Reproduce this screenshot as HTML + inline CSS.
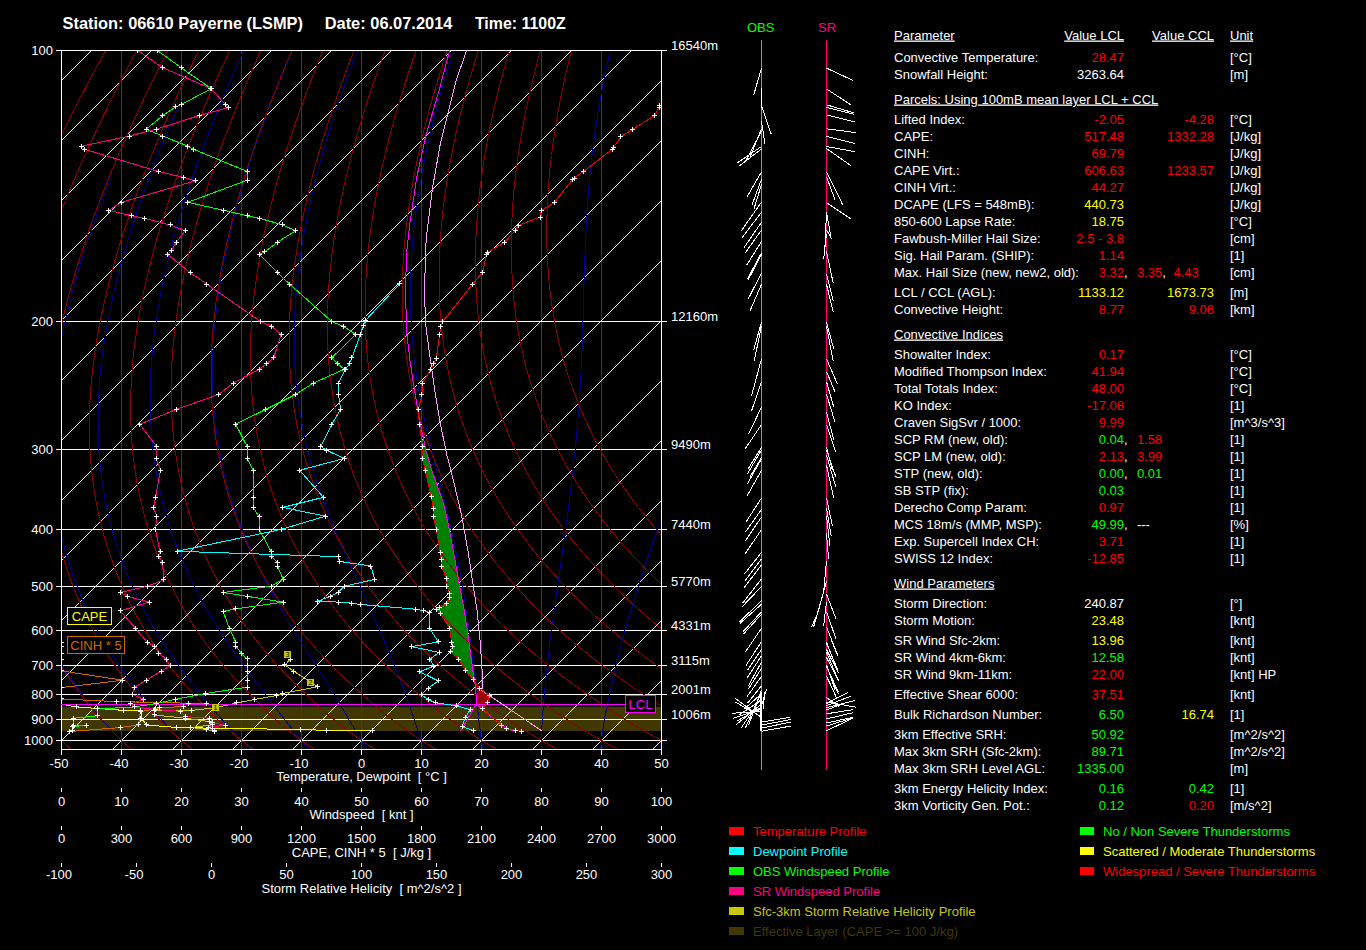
<!DOCTYPE html>
<html><head><meta charset="utf-8"><title>Sounding 06610 Payerne</title>
<style>html,body{margin:0;padding:0;background:#000;overflow:hidden}body{width:1366px;height:950px;position:relative}</style></head>
<body>
<svg width="1366" height="950" viewBox="0 0 1366 950" style="position:absolute;left:0;top:0" font-family="'Liberation Sans', sans-serif" font-size="13px">
<rect width="1366" height="950" fill="#000"/>
<defs><clipPath id="cp"><rect x="61" y="50" width="601" height="700"/></clipPath></defs>
<g clip-path="url(#cp)" shape-rendering="crispEdges">
<rect x="61" y="707" width="601" height="24" fill="#403800"/>
<line x1="121.5" y1="50.5" x2="121.5" y2="749.5" stroke="#006400" stroke-width="1"/>
<line x1="181.5" y1="50.5" x2="181.5" y2="749.5" stroke="#006400" stroke-width="1"/>
<line x1="241.5" y1="50.5" x2="241.5" y2="749.5" stroke="#006400" stroke-width="1"/>
<line x1="301.5" y1="50.5" x2="301.5" y2="749.5" stroke="#006400" stroke-width="1"/>
<line x1="361.5" y1="50.5" x2="361.5" y2="749.5" stroke="#006400" stroke-width="1"/>
<line x1="421.5" y1="50.5" x2="421.5" y2="749.5" stroke="#006400" stroke-width="1"/>
<line x1="481.5" y1="50.5" x2="481.5" y2="749.5" stroke="#006400" stroke-width="1"/>
<line x1="541.5" y1="50.5" x2="541.5" y2="749.5" stroke="#006400" stroke-width="1"/>
<line x1="601.5" y1="50.5" x2="601.5" y2="749.5" stroke="#006400" stroke-width="1"/>
<line x1="-667.5" y1="749.5" x2="31.5" y2="50.5" stroke="#fff" stroke-width="1"/>
<line x1="-607.5" y1="749.5" x2="91.5" y2="50.5" stroke="#fff" stroke-width="1"/>
<line x1="-547.5" y1="749.5" x2="151.5" y2="50.5" stroke="#fff" stroke-width="1"/>
<line x1="-487.5" y1="749.5" x2="211.5" y2="50.5" stroke="#fff" stroke-width="1"/>
<line x1="-427.5" y1="749.5" x2="271.5" y2="50.5" stroke="#fff" stroke-width="1"/>
<line x1="-367.5" y1="749.5" x2="331.5" y2="50.5" stroke="#fff" stroke-width="1"/>
<line x1="-307.5" y1="749.5" x2="391.5" y2="50.5" stroke="#fff" stroke-width="1"/>
<line x1="-247.5" y1="749.5" x2="451.5" y2="50.5" stroke="#fff" stroke-width="1"/>
<line x1="-187.5" y1="749.5" x2="511.5" y2="50.5" stroke="#fff" stroke-width="1"/>
<line x1="-127.5" y1="749.5" x2="571.5" y2="50.5" stroke="#fff" stroke-width="1"/>
<line x1="-67.5" y1="749.5" x2="631.5" y2="50.5" stroke="#fff" stroke-width="1"/>
<line x1="-7.5" y1="749.5" x2="691.5" y2="50.5" stroke="#fff" stroke-width="1"/>
<line x1="52.5" y1="749.5" x2="751.5" y2="50.5" stroke="#fff" stroke-width="1"/>
<line x1="112.5" y1="749.5" x2="811.5" y2="50.5" stroke="#fff" stroke-width="1"/>
<line x1="172.5" y1="749.5" x2="871.5" y2="50.5" stroke="#fff" stroke-width="1"/>
<line x1="232.5" y1="749.5" x2="931.5" y2="50.5" stroke="#fff" stroke-width="1"/>
<line x1="292.5" y1="749.5" x2="991.5" y2="50.5" stroke="#fff" stroke-width="1"/>
<line x1="352.5" y1="749.5" x2="1051.5" y2="50.5" stroke="#fff" stroke-width="1"/>
<line x1="412.5" y1="749.5" x2="1111.5" y2="50.5" stroke="#fff" stroke-width="1"/>
<line x1="472.5" y1="749.5" x2="1171.5" y2="50.5" stroke="#fff" stroke-width="1"/>
<line x1="532.5" y1="749.5" x2="1231.5" y2="50.5" stroke="#fff" stroke-width="1"/>
<line x1="592.5" y1="749.5" x2="1291.5" y2="50.5" stroke="#fff" stroke-width="1"/>
<line x1="652.5" y1="749.5" x2="1351.5" y2="50.5" stroke="#fff" stroke-width="1"/>
<line x1="61.5" y1="50.5" x2="661.5" y2="50.5" stroke="#fff" stroke-width="1"/>
<line x1="61.5" y1="321.5" x2="661.5" y2="321.5" stroke="#fff" stroke-width="1"/>
<line x1="61.5" y1="449.5" x2="661.5" y2="449.5" stroke="#fff" stroke-width="1"/>
<line x1="61.5" y1="529.5" x2="661.5" y2="529.5" stroke="#fff" stroke-width="1"/>
<line x1="61.5" y1="586.5" x2="661.5" y2="586.5" stroke="#fff" stroke-width="1"/>
<line x1="61.5" y1="630.5" x2="661.5" y2="630.5" stroke="#fff" stroke-width="1"/>
<line x1="61.5" y1="665.5" x2="661.5" y2="665.5" stroke="#fff" stroke-width="1"/>
<line x1="61.5" y1="694.5" x2="661.5" y2="694.5" stroke="#fff" stroke-width="1"/>
<line x1="61.5" y1="719.5" x2="661.5" y2="719.5" stroke="#fff" stroke-width="1"/>
<line x1="61.5" y1="740.5" x2="661.5" y2="740.5" stroke="#fff" stroke-width="1"/>
<polygon points="422.0,438.0 422.5,446.4 422.5,458.7 425.1,470.1 431.2,496.4 433.3,508.2 433.3,516.9 436.5,529.5 440.4,553.0 441.2,559.6 441.7,566.2 446.5,578.1 447.0,586.0 449.6,593.9 449.6,597.8 446.5,603.1 439.1,607.1 436.4,609.7 440.4,613.6 449.6,628.1 451.7,642.6 452.3,646.6 450.9,651.9 458.8,659.2 465.4,670.3 473.3,679.5 474.0,681.0 474.7,680.9 472.8,670.3 470.7,654.5 467.5,630.8 464.1,609.7 459.6,586.0 454.9,559.6 449.6,530.6 443.8,504.3 431.7,470.0 425.9,450.3" fill="#008000"/>
<polygon points="474.7,680.9 479.9,688.2 489.2,695.4 487.8,702.0 483.0,709.0 479.0,706.5 476.0,704.5 476.0,694.0" fill="#a00000"/>
<polyline points="-4.9,293.5 -5.9,296.5 -6.8,299.5 -7.8,302.5 -8.7,305.5 -9.7,308.5 -10.6,311.5 -11.5,314.5 -12.4,317.5 -13.3,320.5 -14.1,323.5 -15.0,326.5 -15.8,329.5 -16.7,332.5 -17.5,335.5 -18.3,338.5 -19.1,341.5 -19.8,344.5 -20.6,347.5 -21.4,350.5 -22.1,353.5 -22.8,356.5 -23.5,359.5 -24.2,362.5 -24.9,365.5 -25.5,368.5 -26.2,371.5 -26.8,374.5 -27.4,377.5 -28.0,380.5 -28.6,383.5 -29.2,386.5 -29.7,389.5 -30.2,392.5 -30.8,395.5 -31.3,398.5 -31.8,401.5 -32.2,404.5 -32.7,407.5 -33.1,410.5 -33.5,413.5 -34.0,416.5 -34.3,419.5 -34.7,422.5 -35.1,425.5 -35.4,428.5 -35.7,431.5 -36.0,434.5 -36.3,437.5 -36.6,440.5 -36.9,443.5 -37.1,446.5 -37.3,449.5 -37.5,452.5 -37.7,455.5 -37.9,458.5 -38.0,461.5 -38.2,464.5 -38.3,467.5 -38.4,470.5 -38.4,473.5 -38.5,476.5 -38.5,479.5 -38.5,482.5 -38.5,485.5 -38.4,488.5 -38.4,491.5 -38.3,494.5 -38.2,497.5 -38.1,500.5 -37.9,503.5 -37.8,506.5 -37.6,509.5 -37.4,512.5 -37.1,515.5 -36.9,518.5 -36.6,521.5 -36.3,524.5 -36.0,527.5 -35.7,530.5 -35.3,533.5 -34.9,536.5 -34.5,539.5 -34.1,542.5 -33.6,545.5 -33.1,548.5 -32.6,551.5 -32.1,554.5 -31.5,557.5 -30.9,560.5 -30.3,563.5 -29.7,566.5 -29.0,569.5 -28.3,572.5 -27.6,575.5 -26.9,578.5 -26.1,581.5 -25.3,584.5 -24.5,587.5 -23.7,590.5 -22.8,593.5 -22.0,596.5 -21.1,599.5 -20.1,602.5 -19.2,605.5 -18.2,608.5 -17.2,611.5 -16.1,614.5 -15.0,617.5 -13.9,620.5 -12.8,623.5 -11.6,626.5 -10.4,629.5 -9.1,632.5 -7.8,635.5 -6.5,638.5 -5.1,641.5 -3.7,644.5 -2.3,647.5 -0.8,650.5 0.7,653.5 2.3,656.5 3.9,659.5 5.5,662.5 7.2,665.5 8.9,668.5 10.6,671.5 12.4,674.5 14.2,677.5 16.1,680.5 18.0,683.5 19.9,686.5 21.8,689.5 23.8,692.5 25.9,695.5 27.9,698.5 29.9,701.5 32.0,704.5 34.1,707.5 36.2,710.5 38.4,713.5 40.7,716.5 43.1,719.5 45.5,722.5 48.0,725.5 50.6,728.5 53.2,731.5 55.9,734.5 58.7,737.5 61.5,740.5 64.5,743.5 67.7,746.5 71.1,749.5" fill="none" stroke="#00008b" stroke-width="1" />
<polyline points="51.9,236.5 50.8,239.5 49.7,242.5 48.6,245.5 47.6,248.5 46.5,251.5 45.5,254.5 44.4,257.5 43.4,260.5 42.4,263.5 41.4,266.5 40.4,269.5 39.4,272.5 38.5,275.5 37.5,278.5 36.6,281.5 35.7,284.5 34.7,287.5 33.8,290.5 32.9,293.5 32.0,296.5 31.2,299.5 30.3,302.5 29.5,305.5 28.6,308.5 27.8,311.5 27.0,314.5 26.2,317.5 25.4,320.5 24.6,323.5 23.9,326.5 23.1,329.5 22.4,332.5 21.7,335.5 21.0,338.5 20.3,341.5 19.6,344.5 19.0,347.5 18.3,350.5 17.7,353.5 17.1,356.5 16.5,359.5 15.9,362.5 15.3,365.5 14.8,368.5 14.2,371.5 13.7,374.5 13.2,377.5 12.7,380.5 12.3,383.5 11.8,386.5 11.4,389.5 10.9,392.5 10.5,395.5 10.1,398.5 9.8,401.5 9.4,404.5 9.1,407.5 8.7,410.5 8.4,413.5 8.2,416.5 7.9,419.5 7.6,422.5 7.4,425.5 7.2,428.5 7.0,431.5 6.8,434.5 6.6,437.5 6.5,440.5 6.3,443.5 6.2,446.5 6.1,449.5 6.0,452.5 6.0,455.5 5.9,458.5 5.9,461.5 5.9,464.5 6.0,467.5 6.0,470.5 6.1,473.5 6.2,476.5 6.3,479.5 6.4,482.5 6.6,485.5 6.7,488.5 6.9,491.5 7.2,494.5 7.4,497.5 7.7,500.5 8.0,503.5 8.3,506.5 8.6,509.5 9.0,512.5 9.3,515.5 9.7,518.5 10.1,521.5 10.6,524.5 11.1,527.5 11.5,530.5 12.1,533.5 12.6,536.5 13.2,539.5 13.8,542.5 14.4,545.5 15.0,548.5 15.7,551.5 16.4,554.5 17.1,557.5 17.9,560.5 18.7,563.5 19.5,566.5 20.3,569.5 21.1,572.5 22.0,575.5 22.9,578.5 23.9,581.5 24.8,584.5 25.8,587.5 26.8,590.5 27.8,593.5 28.9,596.5 30.0,599.5 31.1,602.5 32.2,605.5 33.4,608.5 34.6,611.5 35.8,614.5 37.1,617.5 38.4,620.5 39.7,623.5 41.1,626.5 42.5,629.5 43.9,632.5 45.4,635.5 46.9,638.5 48.5,641.5 50.1,644.5 51.7,647.5 53.4,650.5 55.1,653.5 56.9,656.5 58.7,659.5 60.5,662.5 62.4,665.5 64.3,668.5 66.2,671.5 68.2,674.5 70.2,677.5 72.3,680.5 74.4,683.5 76.5,686.5 78.7,689.5 80.9,692.5 83.1,695.5 85.3,698.5 87.6,701.5 89.8,704.5 92.1,707.5 94.4,710.5 96.8,713.5 99.3,716.5 101.8,719.5 104.5,722.5 107.2,725.5 109.9,728.5 112.7,731.5 115.6,734.5 118.5,737.5 121.5,740.5 124.7,743.5 128.1,746.5 131.6,749.5" fill="none" stroke="#00008b" stroke-width="1" />
<polyline points="111.4,176.5 110.2,179.5 109.0,182.5 107.9,185.5 106.7,188.5 105.5,191.5 104.4,194.5 103.2,197.5 102.1,200.5 101.0,203.5 99.8,206.5 98.7,209.5 97.6,212.5 96.5,215.5 95.5,218.5 94.4,221.5 93.3,224.5 92.3,227.5 91.2,230.5 90.2,233.5 89.2,236.5 88.2,239.5 87.2,242.5 86.2,245.5 85.2,248.5 84.3,251.5 83.3,254.5 82.4,257.5 81.4,260.5 80.5,263.5 79.6,266.5 78.7,269.5 77.8,272.5 77.0,275.5 76.1,278.5 75.2,281.5 74.4,284.5 73.6,287.5 72.8,290.5 72.0,293.5 71.2,296.5 70.4,299.5 69.6,302.5 68.9,305.5 68.1,308.5 67.4,311.5 66.7,314.5 66.0,317.5 65.3,320.5 64.6,323.5 64.0,326.5 63.3,329.5 62.7,332.5 62.1,335.5 61.5,338.5 60.9,341.5 60.4,344.5 59.8,347.5 59.3,350.5 58.7,353.5 58.2,356.5 57.7,359.5 57.3,362.5 56.8,365.5 56.4,368.5 55.9,371.5 55.5,374.5 55.1,377.5 54.8,380.5 54.4,383.5 54.1,386.5 53.7,389.5 53.4,392.5 53.2,395.5 52.9,398.5 52.6,401.5 52.4,404.5 52.2,407.5 52.0,410.5 51.8,413.5 51.6,416.5 51.5,419.5 51.3,422.5 51.2,425.5 51.1,428.5 51.0,431.5 51.0,434.5 50.9,437.5 50.9,440.5 50.9,443.5 50.9,446.5 51.0,449.5 51.0,452.5 51.1,455.5 51.2,458.5 51.3,461.5 51.4,464.5 51.6,467.5 51.8,470.5 52.0,473.5 52.2,476.5 52.5,479.5 52.8,482.5 53.1,485.5 53.4,488.5 53.7,491.5 54.1,494.5 54.5,497.5 54.9,500.5 55.3,503.5 55.8,506.5 56.3,509.5 56.8,512.5 57.3,515.5 57.8,518.5 58.4,521.5 59.0,524.5 59.6,527.5 60.3,530.5 60.9,533.5 61.6,536.5 62.4,539.5 63.1,542.5 63.9,545.5 64.7,548.5 65.6,551.5 66.4,554.5 67.3,557.5 68.2,560.5 69.2,563.5 70.1,566.5 71.1,569.5 72.2,572.5 73.2,575.5 74.3,578.5 75.4,581.5 76.5,584.5 77.7,587.5 78.9,590.5 80.1,593.5 81.3,596.5 82.6,599.5 83.9,602.5 85.2,605.5 86.5,608.5 87.9,611.5 89.3,614.5 90.8,617.5 92.2,620.5 93.7,623.5 95.3,626.5 96.9,629.5 98.5,632.5 100.2,635.5 101.9,638.5 103.7,641.5 105.5,644.5 107.3,647.5 109.2,650.5 111.1,653.5 113.0,656.5 115.0,659.5 117.0,662.5 119.1,665.5 121.1,668.5 123.3,671.5 125.4,674.5 127.6,677.5 129.8,680.5 132.1,683.5 134.4,686.5 136.7,689.5 139.1,692.5 141.5,695.5 143.9,698.5 146.2,701.5 148.6,704.5 151.0,707.5 153.5,710.5 156.0,713.5 158.6,716.5 161.3,719.5 164.0,722.5 166.8,725.5 169.7,728.5 172.5,731.5 175.5,734.5 178.5,737.5 181.5,740.5 184.7,743.5 188.1,746.5 191.6,749.5" fill="none" stroke="#00008b" stroke-width="1" />
<polyline points="176.5,110.5 175.2,113.5 173.8,116.5 172.6,119.5 171.3,122.5 170.0,125.5 168.7,128.5 167.5,131.5 166.2,134.5 165.0,137.5 163.7,140.5 162.5,143.5 161.3,146.5 160.1,149.5 158.9,152.5 157.7,155.5 156.5,158.5 155.3,161.5 154.2,164.5 153.0,167.5 151.9,170.5 150.7,173.5 149.6,176.5 148.5,179.5 147.4,182.5 146.3,185.5 145.2,188.5 144.1,191.5 143.0,194.5 141.9,197.5 140.9,200.5 139.9,203.5 138.8,206.5 137.8,209.5 136.8,212.5 135.8,215.5 134.8,218.5 133.8,221.5 132.8,224.5 131.9,227.5 130.9,230.5 130.0,233.5 129.1,236.5 128.2,239.5 127.3,242.5 126.4,245.5 125.5,248.5 124.6,251.5 123.7,254.5 122.9,257.5 122.1,260.5 121.2,263.5 120.4,266.5 119.6,269.5 118.8,272.5 118.1,275.5 117.3,278.5 116.5,281.5 115.8,284.5 115.1,287.5 114.4,290.5 113.7,293.5 113.0,296.5 112.3,299.5 111.6,302.5 111.0,305.5 110.4,308.5 109.7,311.5 109.1,314.5 108.5,317.5 108.0,320.5 107.4,323.5 106.8,326.5 106.3,329.5 105.8,332.5 105.3,335.5 104.8,338.5 104.3,341.5 103.9,344.5 103.4,347.5 103.0,350.5 102.6,353.5 102.2,356.5 101.8,359.5 101.5,362.5 101.1,365.5 100.8,368.5 100.5,371.5 100.2,374.5 99.9,377.5 99.7,380.5 99.4,383.5 99.2,386.5 99.0,389.5 98.8,392.5 98.7,395.5 98.5,398.5 98.4,401.5 98.3,404.5 98.2,407.5 98.1,410.5 98.1,413.5 98.0,416.5 98.0,419.5 98.0,422.5 98.0,425.5 98.1,428.5 98.1,431.5 98.2,434.5 98.3,437.5 98.4,440.5 98.5,443.5 98.7,446.5 98.9,449.5 99.1,452.5 99.3,455.5 99.5,458.5 99.8,461.5 100.1,464.5 100.4,467.5 100.7,470.5 101.1,473.5 101.4,476.5 101.8,479.5 102.3,482.5 102.7,485.5 103.2,488.5 103.7,491.5 104.2,494.5 104.7,497.5 105.3,500.5 105.9,503.5 106.5,506.5 107.1,509.5 107.8,512.5 108.5,515.5 109.2,518.5 109.9,521.5 110.7,524.5 111.5,527.5 112.3,530.5 113.1,533.5 114.0,536.5 114.9,539.5 115.8,542.5 116.8,545.5 117.8,548.5 118.8,551.5 119.8,554.5 120.9,557.5 122.0,560.5 123.1,563.5 124.2,566.5 125.4,569.5 126.6,572.5 127.8,575.5 129.1,578.5 130.4,581.5 131.7,584.5 133.0,587.5 134.4,590.5 135.8,593.5 137.2,596.5 138.6,599.5 140.1,602.5 141.6,605.5 143.1,608.5 144.6,611.5 146.2,614.5 147.8,617.5 149.5,620.5 151.2,623.5 152.9,626.5 154.7,629.5 156.5,632.5 158.3,635.5 160.2,638.5 162.1,641.5 164.1,644.5 166.1,647.5 168.1,650.5 170.2,653.5 172.2,656.5 174.4,659.5 176.5,662.5 178.7,665.5 180.9,668.5 183.2,671.5 185.5,674.5 187.8,677.5 190.1,680.5 192.5,683.5 194.8,686.5 197.2,689.5 199.7,692.5 202.1,695.5 204.6,698.5 207.0,701.5 209.4,704.5 211.8,707.5 214.3,710.5 216.8,713.5 219.4,716.5 222.0,719.5 224.7,722.5 227.4,725.5 230.2,728.5 233.0,731.5 235.8,734.5 238.6,737.5 241.5,740.5 244.5,743.5 247.7,746.5 251.0,749.5" fill="none" stroke="#00008b" stroke-width="1" />
<polyline points="243.8,50.5 242.4,53.5 241.1,56.5 239.7,59.5 238.3,62.5 237.0,65.5 235.7,68.5 234.3,71.5 233.0,74.5 231.7,77.5 230.4,80.5 229.0,83.5 227.7,86.5 226.5,89.5 225.2,92.5 223.9,95.5 222.6,98.5 221.4,101.5 220.1,104.5 218.9,107.5 217.6,110.5 216.4,113.5 215.2,116.5 214.0,119.5 212.8,122.5 211.6,125.5 210.4,128.5 209.2,131.5 208.1,134.5 206.9,137.5 205.8,140.5 204.6,143.5 203.5,146.5 202.4,149.5 201.3,152.5 200.2,155.5 199.1,158.5 198.0,161.5 196.9,164.5 195.8,167.5 194.8,170.5 193.7,173.5 192.7,176.5 191.7,179.5 190.7,182.5 189.7,185.5 188.7,188.5 187.7,191.5 186.7,194.5 185.7,197.5 184.8,200.5 183.8,203.5 182.9,206.5 182.0,209.5 181.1,212.5 180.2,215.5 179.3,218.5 178.4,221.5 177.5,224.5 176.7,227.5 175.8,230.5 175.0,233.5 174.2,236.5 173.3,239.5 172.5,242.5 171.8,245.5 171.0,248.5 170.2,251.5 169.5,254.5 168.7,257.5 168.0,260.5 167.3,263.5 166.6,266.5 165.9,269.5 165.2,272.5 164.5,275.5 163.9,278.5 163.2,281.5 162.6,284.5 162.0,287.5 161.4,290.5 160.8,293.5 160.2,296.5 159.7,299.5 159.1,302.5 158.6,305.5 158.1,308.5 157.6,311.5 157.1,314.5 156.6,317.5 156.2,320.5 155.7,323.5 155.3,326.5 154.9,329.5 154.5,332.5 154.1,335.5 153.7,338.5 153.4,341.5 153.1,344.5 152.7,347.5 152.4,350.5 152.2,353.5 151.9,356.5 151.7,359.5 151.4,362.5 151.2,365.5 151.0,368.5 150.9,371.5 150.7,374.5 150.6,377.5 150.5,380.5 150.4,383.5 150.3,386.5 150.2,389.5 150.2,392.5 150.1,395.5 150.1,398.5 150.2,401.5 150.2,404.5 150.2,407.5 150.3,410.5 150.4,413.5 150.5,416.5 150.6,419.5 150.8,422.5 150.9,425.5 151.1,428.5 151.3,431.5 151.6,434.5 151.8,437.5 152.1,440.5 152.4,443.5 152.7,446.5 153.0,449.5 153.4,452.5 153.7,455.5 154.1,458.5 154.6,461.5 155.0,464.5 155.5,467.5 156.0,470.5 156.5,473.5 157.0,476.5 157.6,479.5 158.2,482.5 158.8,485.5 159.5,488.5 160.1,491.5 160.8,494.5 161.5,497.5 162.3,500.5 163.0,503.5 163.8,506.5 164.6,509.5 165.5,512.5 166.3,515.5 167.2,518.5 168.1,521.5 169.1,524.5 170.0,527.5 171.0,530.5 172.0,533.5 173.1,536.5 174.2,539.5 175.3,542.5 176.4,545.5 177.6,548.5 178.7,551.5 180.0,554.5 181.2,557.5 182.5,560.5 183.8,563.5 185.1,566.5 186.5,569.5 187.8,572.5 189.2,575.5 190.7,578.5 192.1,581.5 193.6,584.5 195.1,587.5 196.6,590.5 198.2,593.5 199.8,596.5 201.4,599.5 203.0,602.5 204.6,605.5 206.3,608.5 208.0,611.5 209.7,614.5 211.5,617.5 213.3,620.5 215.1,623.5 217.0,626.5 218.8,629.5 220.8,632.5 222.7,635.5 224.7,638.5 226.7,641.5 228.7,644.5 230.8,647.5 232.9,650.5 235.0,653.5 237.1,656.5 239.3,659.5 241.5,662.5 243.7,665.5 245.9,668.5 248.1,671.5 250.4,674.5 252.6,677.5 254.9,680.5 257.2,683.5 259.5,686.5 261.8,689.5 264.1,692.5 266.4,695.5 268.7,698.5 270.9,701.5 273.2,704.5 275.4,707.5 277.6,710.5 279.9,713.5 282.2,716.5 284.6,719.5 286.9,722.5 289.3,725.5 291.8,728.5 294.2,731.5 296.6,734.5 299.0,737.5 301.5,740.5 304.1,743.5 306.8,746.5 309.6,749.5" fill="none" stroke="#00008b" stroke-width="1" />
<polyline points="292.3,50.5 291.0,53.5 289.7,56.5 288.5,59.5 287.2,62.5 285.9,65.5 284.7,68.5 283.4,71.5 282.2,74.5 281.0,77.5 279.8,80.5 278.6,83.5 277.4,86.5 276.2,89.5 275.0,92.5 273.8,95.5 272.6,98.5 271.5,101.5 270.3,104.5 269.2,107.5 268.1,110.5 266.9,113.5 265.8,116.5 264.7,119.5 263.6,122.5 262.5,125.5 261.5,128.5 260.4,131.5 259.3,134.5 258.3,137.5 257.2,140.5 256.2,143.5 255.2,146.5 254.2,149.5 253.2,152.5 252.2,155.5 251.2,158.5 250.2,161.5 249.3,164.5 248.3,167.5 247.4,170.5 246.4,173.5 245.5,176.5 244.6,179.5 243.7,182.5 242.8,185.5 241.9,188.5 241.0,191.5 240.2,194.5 239.3,197.5 238.5,200.5 237.7,203.5 236.9,206.5 236.1,209.5 235.3,212.5 234.5,215.5 233.7,218.5 233.0,221.5 232.2,224.5 231.5,227.5 230.8,230.5 230.1,233.5 229.4,236.5 228.7,239.5 228.0,242.5 227.3,245.5 226.7,248.5 226.0,251.5 225.4,254.5 224.8,257.5 224.2,260.5 223.6,263.5 223.1,266.5 222.5,269.5 222.0,272.5 221.4,275.5 220.9,278.5 220.4,281.5 219.9,284.5 219.4,287.5 219.0,290.5 218.5,293.5 218.1,296.5 217.7,299.5 217.3,302.5 216.9,305.5 216.5,308.5 216.2,311.5 215.8,314.5 215.5,317.5 215.2,320.5 214.9,323.5 214.6,326.5 214.3,329.5 214.1,332.5 213.9,335.5 213.6,338.5 213.5,341.5 213.3,344.5 213.1,347.5 213.0,350.5 212.9,353.5 212.8,356.5 212.7,359.5 212.6,362.5 212.6,365.5 212.5,368.5 212.5,371.5 212.5,374.5 212.6,377.5 212.6,380.5 212.7,383.5 212.8,386.5 212.9,389.5 213.0,392.5 213.1,395.5 213.3,398.5 213.5,401.5 213.7,404.5 213.9,407.5 214.2,410.5 214.4,413.5 214.7,416.5 215.0,419.5 215.3,422.5 215.7,425.5 216.1,428.5 216.4,431.5 216.9,434.5 217.3,437.5 217.7,440.5 218.2,443.5 218.7,446.5 219.2,449.5 219.8,452.5 220.3,455.5 220.9,458.5 221.5,461.5 222.2,464.5 222.8,467.5 223.5,470.5 224.2,473.5 225.0,476.5 225.7,479.5 226.5,482.5 227.3,485.5 228.1,488.5 229.0,491.5 229.9,494.5 230.8,497.5 231.7,500.5 232.7,503.5 233.7,506.5 234.7,509.5 235.7,512.5 236.7,515.5 237.8,518.5 238.9,521.5 240.0,524.5 241.2,527.5 242.4,530.5 243.6,533.5 244.8,536.5 246.0,539.5 247.3,542.5 248.6,545.5 250.0,548.5 251.3,551.5 252.7,554.5 254.1,557.5 255.5,560.5 257.0,563.5 258.4,566.5 259.9,569.5 261.4,572.5 263.0,575.5 264.5,578.5 266.1,581.5 267.7,584.5 269.3,587.5 270.9,590.5 272.5,593.5 274.2,596.5 275.8,599.5 277.5,602.5 279.2,605.5 280.9,608.5 282.6,611.5 284.4,614.5 286.1,617.5 287.9,620.5 289.7,623.5 291.5,626.5 293.3,629.5 295.1,632.5 297.0,635.5 298.9,638.5 300.8,641.5 302.6,644.5 304.5,647.5 306.4,650.5 308.4,653.5 310.3,656.5 312.2,659.5 314.1,662.5 316.0,665.5 317.9,668.5 319.9,671.5 321.8,674.5 323.7,677.5 325.6,680.5 327.5,683.5 329.4,686.5 331.2,689.5 333.1,692.5 334.9,695.5 336.7,698.5 338.5,701.5 340.2,704.5 341.9,707.5 343.7,710.5 345.4,713.5 347.1,716.5 348.9,719.5 350.7,722.5 352.5,725.5 354.3,728.5 356.1,731.5 357.9,734.5 359.7,737.5 361.5,740.5 363.4,743.5 365.4,746.5 367.5,749.5" fill="none" stroke="#00008b" stroke-width="1" />
<polyline points="357.4,50.5 356.3,53.5 355.1,56.5 354.0,59.5 352.8,62.5 351.7,65.5 350.6,68.5 349.5,71.5 348.4,74.5 347.3,77.5 346.2,80.5 345.1,83.5 344.0,86.5 343.0,89.5 341.9,92.5 340.9,95.5 339.9,98.5 338.8,101.5 337.8,104.5 336.8,107.5 335.8,110.5 334.8,113.5 333.9,116.5 332.9,119.5 331.9,122.5 331.0,125.5 330.1,128.5 329.1,131.5 328.2,134.5 327.3,137.5 326.4,140.5 325.5,143.5 324.7,146.5 323.8,149.5 322.9,152.5 322.1,155.5 321.3,158.5 320.4,161.5 319.6,164.5 318.8,167.5 318.0,170.5 317.2,173.5 316.5,176.5 315.7,179.5 315.0,182.5 314.2,185.5 313.5,188.5 312.8,191.5 312.1,194.5 311.4,197.5 310.7,200.5 310.1,203.5 309.4,206.5 308.8,209.5 308.1,212.5 307.5,215.5 306.9,218.5 306.3,221.5 305.7,224.5 305.2,227.5 304.6,230.5 304.1,233.5 303.5,236.5 303.0,239.5 302.5,242.5 302.0,245.5 301.6,248.5 301.1,251.5 300.6,254.5 300.2,257.5 299.8,260.5 299.4,263.5 299.0,266.5 298.6,269.5 298.2,272.5 297.9,275.5 297.6,278.5 297.2,281.5 296.9,284.5 296.6,287.5 296.4,290.5 296.1,293.5 295.9,296.5 295.6,299.5 295.4,302.5 295.2,305.5 295.0,308.5 294.9,311.5 294.7,314.5 294.6,317.5 294.5,320.5 294.4,323.5 294.3,326.5 294.2,329.5 294.2,332.5 294.1,335.5 294.1,338.5 294.1,341.5 294.2,344.5 294.2,347.5 294.3,350.5 294.4,353.5 294.5,356.5 294.6,359.5 294.7,362.5 294.9,365.5 295.1,368.5 295.3,371.5 295.5,374.5 295.7,377.5 296.0,380.5 296.3,383.5 296.6,386.5 296.9,389.5 297.2,392.5 297.6,395.5 298.0,398.5 298.4,401.5 298.8,404.5 299.3,407.5 299.7,410.5 300.2,413.5 300.7,416.5 301.2,419.5 301.8,422.5 302.3,425.5 302.9,428.5 303.5,431.5 304.2,434.5 304.8,437.5 305.5,440.5 306.2,443.5 306.9,446.5 307.6,449.5 308.3,452.5 309.1,455.5 309.9,458.5 310.7,461.5 311.6,464.5 312.4,467.5 313.3,470.5 314.2,473.5 315.1,476.5 316.1,479.5 317.0,482.5 318.0,485.5 319.0,488.5 320.1,491.5 321.1,494.5 322.2,497.5 323.3,500.5 324.4,503.5 325.5,506.5 326.6,509.5 327.8,512.5 328.9,515.5 330.1,518.5 331.3,521.5 332.6,524.5 333.8,527.5 335.0,530.5 336.3,533.5 337.5,536.5 338.8,539.5 340.1,542.5 341.4,545.5 342.8,548.5 344.1,551.5 345.4,554.5 346.8,557.5 348.2,560.5 349.5,563.5 350.9,566.5 352.3,569.5 353.7,572.5 355.0,575.5 356.4,578.5 357.8,581.5 359.2,584.5 360.5,587.5 361.9,590.5 363.3,593.5 364.6,596.5 366.0,599.5 367.3,602.5 368.7,605.5 370.0,608.5 371.3,611.5 372.7,614.5 374.0,617.5 375.3,620.5 376.6,623.5 377.9,626.5 379.3,629.5 380.6,632.5 381.9,635.5 383.2,638.5 384.5,641.5 385.8,644.5 387.0,647.5 388.3,650.5 389.6,653.5 390.8,656.5 392.1,659.5 393.3,662.5 394.5,665.5 395.7,668.5 396.9,671.5 398.1,674.5 399.3,677.5 400.5,680.5 401.6,683.5 402.8,686.5 403.9,689.5 405.0,692.5 406.1,695.5 407.1,698.5 408.1,701.5 409.1,704.5 410.1,707.5 411.1,710.5 412.1,713.5 413.1,716.5 414.1,719.5 415.1,722.5 416.2,725.5 417.2,728.5 418.3,731.5 419.3,734.5 420.4,737.5 421.5,740.5 422.7,743.5 423.9,746.5 425.3,749.5" fill="none" stroke="#00008b" stroke-width="1" />
<polyline points="453.8,50.5 452.8,53.5 451.9,56.5 450.9,59.5 450.0,62.5 449.0,65.5 448.1,68.5 447.2,71.5 446.3,74.5 445.4,77.5 444.5,80.5 443.6,83.5 442.7,86.5 441.8,89.5 441.0,92.5 440.1,95.5 439.3,98.5 438.5,101.5 437.7,104.5 436.9,107.5 436.1,110.5 435.3,113.5 434.5,116.5 433.8,119.5 433.0,122.5 432.3,125.5 431.6,128.5 430.8,131.5 430.1,134.5 429.4,137.5 428.7,140.5 428.1,143.5 427.4,146.5 426.8,149.5 426.1,152.5 425.5,155.5 424.9,158.5 424.3,161.5 423.7,164.5 423.1,167.5 422.5,170.5 422.0,173.5 421.4,176.5 420.9,179.5 420.4,182.5 419.8,185.5 419.4,188.5 418.9,191.5 418.4,194.5 417.9,197.5 417.5,200.5 417.1,203.5 416.6,206.5 416.2,209.5 415.8,212.5 415.4,215.5 415.1,218.5 414.7,221.5 414.4,224.5 414.1,227.5 413.7,230.5 413.4,233.5 413.2,236.5 412.9,239.5 412.6,242.5 412.4,245.5 412.1,248.5 411.9,251.5 411.7,254.5 411.5,257.5 411.4,260.5 411.2,263.5 411.1,266.5 410.9,269.5 410.8,272.5 410.7,275.5 410.6,278.5 410.6,281.5 410.5,284.5 410.5,287.5 410.5,290.5 410.5,293.5 410.5,296.5 410.5,299.5 410.5,302.5 410.6,305.5 410.6,308.5 410.7,311.5 410.8,314.5 410.9,317.5 411.1,320.5 411.2,323.5 411.4,326.5 411.6,329.5 411.8,332.5 412.0,335.5 412.2,338.5 412.5,341.5 412.7,344.5 413.0,347.5 413.3,350.5 413.7,353.5 414.0,356.5 414.3,359.5 414.7,362.5 415.1,365.5 415.5,368.5 415.9,371.5 416.4,374.5 416.8,377.5 417.3,380.5 417.7,383.5 418.2,386.5 418.8,389.5 419.3,392.5 419.8,395.5 420.4,398.5 420.9,401.5 421.5,404.5 422.1,407.5 422.7,410.5 423.3,413.5 423.9,416.5 424.6,419.5 425.2,422.5 425.9,425.5 426.5,428.5 427.2,431.5 427.9,434.5 428.6,437.5 429.3,440.5 430.0,443.5 430.7,446.5 431.4,449.5 432.1,452.5 432.8,455.5 433.6,458.5 434.3,461.5 435.0,464.5 435.8,467.5 436.5,470.5 437.3,473.5 438.1,476.5 438.8,479.5 439.6,482.5 440.3,485.5 441.1,488.5 441.8,491.5 442.6,494.5 443.4,497.5 444.1,500.5 444.9,503.5 445.6,506.5 446.3,509.5 447.1,512.5 447.8,515.5 448.5,518.5 449.2,521.5 449.9,524.5 450.6,527.5 451.3,530.5 452.0,533.5 452.7,536.5 453.3,539.5 454.0,542.5 454.7,545.5 455.3,548.5 456.0,551.5 456.6,554.5 457.2,557.5 457.8,560.5 458.4,563.5 459.0,566.5 459.6,569.5 460.2,572.5 460.7,575.5 461.3,578.5 461.8,581.5 462.3,584.5 462.8,587.5 463.3,590.5 463.8,593.5 464.3,596.5 464.7,599.5 465.2,602.5 465.6,605.5 466.0,608.5 466.4,611.5 466.9,614.5 467.3,617.5 467.7,620.5 468.1,623.5 468.4,626.5 468.8,629.5 469.2,632.5 469.6,635.5 470.0,638.5 470.4,641.5 470.8,644.5 471.1,647.5 471.5,650.5 471.9,653.5 472.2,656.5 472.6,659.5 472.9,662.5 473.3,665.5 473.6,668.5 474.0,671.5 474.3,674.5 474.6,677.5 475.0,680.5 475.3,683.5 475.6,686.5 476.0,689.5 476.3,692.5 476.6,695.5 476.9,698.5 477.1,701.5 477.4,704.5 477.6,707.5 477.9,710.5 478.2,713.5 478.5,716.5 478.8,719.5 479.1,722.5 479.5,725.5 479.9,728.5 480.3,731.5 480.7,734.5 481.1,737.5 481.5,740.5 482.0,743.5 482.6,746.5 483.3,749.5" fill="none" stroke="#00008b" stroke-width="1" />
<polyline points="610.3,50.5 609.6,53.5 608.9,56.5 608.2,59.5 607.6,62.5 606.9,65.5 606.3,68.5 605.6,71.5 605.0,74.5 604.4,77.5 603.8,80.5 603.2,83.5 602.6,86.5 602.1,89.5 601.5,92.5 600.9,95.5 600.4,98.5 599.9,101.5 599.4,104.5 598.8,107.5 598.3,110.5 597.8,113.5 597.4,116.5 596.9,119.5 596.4,122.5 596.0,125.5 595.5,128.5 595.1,131.5 594.7,134.5 594.3,137.5 593.9,140.5 593.5,143.5 593.1,146.5 592.7,149.5 592.4,152.5 592.0,155.5 591.7,158.5 591.3,161.5 591.0,164.5 590.7,167.5 590.4,170.5 590.1,173.5 589.8,176.5 589.5,179.5 589.2,182.5 589.0,185.5 588.7,188.5 588.5,191.5 588.2,194.5 588.0,197.5 587.8,200.5 587.6,203.5 587.4,206.5 587.2,209.5 587.0,212.5 586.8,215.5 586.6,218.5 586.4,221.5 586.3,224.5 586.1,227.5 586.0,230.5 585.8,233.5 585.7,236.5 585.6,239.5 585.4,242.5 585.3,245.5 585.2,248.5 585.1,251.5 585.0,254.5 584.8,257.5 584.7,260.5 584.6,263.5 584.5,266.5 584.5,269.5 584.4,272.5 584.3,275.5 584.2,278.5 584.1,281.5 584.0,284.5 583.9,287.5 583.8,290.5 583.8,293.5 583.7,296.5 583.6,299.5 583.5,302.5 583.4,305.5 583.3,308.5 583.2,311.5 583.2,314.5 583.1,317.5 583.0,320.5 582.9,323.5 582.8,326.5 582.7,329.5 582.6,332.5 582.5,335.5 582.4,338.5 582.3,341.5 582.2,344.5 582.1,347.5 581.9,350.5 581.8,353.5 581.7,356.5 581.6,359.5 581.4,362.5 581.3,365.5 581.2,368.5 581.0,371.5 580.9,374.5 580.7,377.5 580.5,380.5 580.4,383.5 580.2,386.5 580.0,389.5 579.8,392.5 579.7,395.5 579.5,398.5 579.3,401.5 579.1,404.5 578.8,407.5 578.6,410.5 578.4,413.5 578.2,416.5 577.9,419.5 577.7,422.5 577.4,425.5 577.2,428.5 576.9,431.5 576.6,434.5 576.3,437.5 576.1,440.5 575.8,443.5 575.5,446.5 575.2,449.5 574.8,452.5 574.5,455.5 574.2,458.5 573.9,461.5 573.6,464.5 573.2,467.5 572.9,470.5 572.6,473.5 572.2,476.5 571.9,479.5 571.5,482.5 571.2,485.5 570.8,488.5 570.4,491.5 570.1,494.5 569.7,497.5 569.3,500.5 568.9,503.5 568.5,506.5 568.2,509.5 567.8,512.5 567.4,515.5 567.0,518.5 566.6,521.5 566.2,524.5 565.8,527.5 565.4,530.5 565.0,533.5 564.5,536.5 564.1,539.5 563.7,542.5 563.3,545.5 562.9,548.5 562.5,551.5 562.1,554.5 561.6,557.5 561.2,560.5 560.8,563.5 560.4,566.5 560.0,569.5 559.6,572.5 559.1,575.5 558.7,578.5 558.3,581.5 557.9,584.5 557.4,587.5 557.0,590.5 556.6,593.5 556.1,596.5 555.7,599.5 555.3,602.5 554.9,605.5 554.4,608.5 554.0,611.5 553.6,614.5 553.2,617.5 552.7,620.5 552.3,623.5 551.9,626.5 551.5,629.5 551.1,632.5 550.8,635.5 550.4,638.5 550.0,641.5 549.7,644.5 549.3,647.5 548.9,650.5 548.6,653.5 548.3,656.5 547.9,659.5 547.6,662.5 547.3,665.5 547.0,668.5 546.7,671.5 546.4,674.5 546.1,677.5 545.8,680.5 545.5,683.5 545.2,686.5 544.9,689.5 544.7,692.5 544.4,695.5 544.1,698.5 543.8,701.5 543.5,704.5 543.2,707.5 543.0,710.5 542.7,713.5 542.5,716.5 542.3,719.5 542.1,722.5 542.0,725.5 541.8,728.5 541.7,731.5 541.6,734.5 541.5,737.5 541.5,740.5 541.5,743.5 541.6,746.5 541.8,749.5" fill="none" stroke="#00008b" stroke-width="1" />
<polyline points="853.4,50.5 852.3,53.5 851.1,56.5 850.0,59.5 848.9,62.5 847.8,65.5 846.6,68.5 845.5,71.5 844.4,74.5 843.2,77.5 842.1,80.5 840.9,83.5 839.8,86.5 838.6,89.5 837.5,92.5 836.3,95.5 835.1,98.5 834.0,101.5 832.8,104.5 831.6,107.5 830.4,110.5 829.3,113.5 828.1,116.5 826.9,119.5 825.7,122.5 824.5,125.5 823.3,128.5 822.1,131.5 820.8,134.5 819.6,137.5 818.4,140.5 817.2,143.5 816.0,146.5 814.7,149.5 813.5,152.5 812.3,155.5 811.0,158.5 809.8,161.5 808.6,164.5 807.3,167.5 806.1,170.5 804.8,173.5 803.6,176.5 802.3,179.5 801.0,182.5 799.8,185.5 798.5,188.5 797.3,191.5 796.0,194.5 794.7,197.5 793.4,200.5 792.2,203.5 790.9,206.5 789.6,209.5 788.3,212.5 787.1,215.5 785.8,218.5 784.5,221.5 783.2,224.5 781.9,227.5 780.6,230.5 779.3,233.5 778.0,236.5 776.7,239.5 775.4,242.5 774.1,245.5 772.8,248.5 771.5,251.5 770.2,254.5 768.9,257.5 767.6,260.5 766.3,263.5 765.0,266.5 763.7,269.5 762.4,272.5 761.1,275.5 759.8,278.5 758.5,281.5 757.2,284.5 755.9,287.5 754.6,290.5 753.3,293.5 752.0,296.5 750.7,299.5 749.4,302.5 748.1,305.5 746.8,308.5 745.5,311.5 744.2,314.5 742.9,317.5 741.6,320.5 740.3,323.5 739.0,326.5 737.7,329.5 736.4,332.5 735.1,335.5 733.8,338.5 732.5,341.5 731.2,344.5 729.9,347.5 728.6,350.5 727.3,353.5 726.1,356.5 724.8,359.5 723.5,362.5 722.2,365.5 721.0,368.5 719.7,371.5 718.4,374.5 717.2,377.5 715.9,380.5 714.6,383.5 713.4,386.5 712.1,389.5 710.9,392.5 709.6,395.5 708.4,398.5 707.1,401.5 705.9,404.5 704.6,407.5 703.4,410.5 702.2,413.5 700.9,416.5 699.7,419.5 698.5,422.5 697.3,425.5 696.1,428.5 694.8,431.5 693.6,434.5 692.4,437.5 691.2,440.5 690.0,443.5 688.8,446.5 687.6,449.5 686.4,452.5 685.2,455.5 684.0,458.5 682.9,461.5 681.7,464.5 680.5,467.5 679.3,470.5 678.2,473.5 677.0,476.5 675.9,479.5 674.7,482.5 673.6,485.5 672.4,488.5 671.3,491.5 670.2,494.5 669.1,497.5 667.9,500.5 666.8,503.5 665.7,506.5 664.6,509.5 663.5,512.5 662.4,515.5 661.3,518.5 660.3,521.5 659.2,524.5 658.1,527.5 657.0,530.5 656.0,533.5 654.9,536.5 653.9,539.5 652.8,542.5 651.8,545.5 650.8,548.5 649.7,551.5 648.7,554.5 647.7,557.5 646.7,560.5 645.7,563.5 644.7,566.5 643.7,569.5 642.7,572.5 641.8,575.5 640.8,578.5 639.8,581.5 638.9,584.5 637.9,587.5 637.0,590.5 636.0,593.5 635.1,596.5 634.1,599.5 633.2,602.5 632.3,605.5 631.4,608.5 630.5,611.5 629.6,614.5 628.7,617.5 627.8,620.5 626.9,623.5 626.1,626.5 625.2,629.5 624.4,632.5 623.6,635.5 622.8,638.5 622.0,641.5 621.2,644.5 620.4,647.5 619.6,650.5 618.9,653.5 618.1,656.5 617.4,659.5 616.6,662.5 615.9,665.5 615.2,668.5 614.5,671.5 613.8,674.5 613.2,677.5 612.5,680.5 611.8,683.5 611.2,686.5 610.5,689.5 609.9,692.5 609.3,695.5 608.7,698.5 608.0,701.5 607.4,704.5 606.8,707.5 606.2,710.5 605.6,713.5 605.0,716.5 604.5,719.5 604.0,722.5 603.5,725.5 603.1,728.5 602.7,731.5 602.2,734.5 601.9,737.5 601.5,740.5 601.2,743.5 601.0,746.5 600.9,749.5" fill="none" stroke="#00008b" stroke-width="1" />
<polyline points="1014.1,50.5 1012.1,53.5 1010.1,56.5 1008.1,59.5 1006.1,62.5 1004.0,65.5 1002.0,68.5 1000.0,71.5 998.0,74.5 996.0,77.5 994.0,80.5 992.0,83.5 990.0,86.5 988.0,89.5 986.0,92.5 984.0,95.5 982.0,98.5 980.0,101.5 978.0,104.5 976.0,107.5 974.0,110.5 972.1,113.5 970.1,116.5 968.1,119.5 966.1,122.5 964.2,125.5 962.2,128.5 960.2,131.5 958.3,134.5 956.3,137.5 954.3,140.5 952.4,143.5 950.4,146.5 948.5,149.5 946.5,152.5 944.6,155.5 942.6,158.5 940.7,161.5 938.7,164.5 936.8,167.5 934.9,170.5 932.9,173.5 931.0,176.5 929.1,179.5 927.1,182.5 925.2,185.5 923.3,188.5 921.4,191.5 919.5,194.5 917.6,197.5 915.7,200.5 913.8,203.5 911.9,206.5 910.0,209.5 908.1,212.5 906.2,215.5 904.3,218.5 902.4,221.5 900.5,224.5 898.6,227.5 896.8,230.5 894.9,233.5 893.0,236.5 891.1,239.5 889.3,242.5 887.4,245.5 885.6,248.5 883.7,251.5 881.9,254.5 880.0,257.5 878.2,260.5 876.3,263.5 874.5,266.5 872.7,269.5 870.8,272.5 869.0,275.5 867.2,278.5 865.4,281.5 863.6,284.5 861.8,287.5 860.0,290.5 858.1,293.5 856.4,296.5 854.6,299.5 852.8,302.5 851.0,305.5 849.2,308.5 847.4,311.5 845.7,314.5 843.9,317.5 842.1,320.5 840.4,323.5 838.6,326.5 836.8,329.5 835.1,332.5 833.4,335.5 831.6,338.5 829.9,341.5 828.2,344.5 826.5,347.5 824.7,350.5 823.0,353.5 821.3,356.5 819.6,359.5 817.9,362.5 816.2,365.5 814.6,368.5 812.9,371.5 811.2,374.5 809.5,377.5 807.9,380.5 806.2,383.5 804.6,386.5 802.9,389.5 801.3,392.5 799.6,395.5 798.0,398.5 796.4,401.5 794.8,404.5 793.2,407.5 791.5,410.5 789.9,413.5 788.3,416.5 786.8,419.5 785.2,422.5 783.6,425.5 782.0,428.5 780.4,431.5 778.9,434.5 777.3,437.5 775.8,440.5 774.2,443.5 772.7,446.5 771.2,449.5 769.6,452.5 768.1,455.5 766.6,458.5 765.1,461.5 763.6,464.5 762.1,467.5 760.6,470.5 759.1,473.5 757.6,476.5 756.2,479.5 754.7,482.5 753.3,485.5 751.8,488.5 750.4,491.5 748.9,494.5 747.5,497.5 746.1,500.5 744.7,503.5 743.3,506.5 741.9,509.5 740.5,512.5 739.1,515.5 737.8,518.5 736.4,521.5 735.0,524.5 733.7,527.5 732.3,530.5 731.0,533.5 729.6,536.5 728.3,539.5 727.0,542.5 725.7,545.5 724.4,548.5 723.1,551.5 721.8,554.5 720.6,557.5 719.3,560.5 718.0,563.5 716.8,566.5 715.6,569.5 714.3,572.5 713.1,575.5 711.9,578.5 710.7,581.5 709.5,584.5 708.3,587.5 707.1,590.5 705.9,593.5 704.7,596.5 703.5,599.5 702.4,602.5 701.2,605.5 700.1,608.5 699.0,611.5 697.8,614.5 696.7,617.5 695.6,620.5 694.5,623.5 693.4,626.5 692.4,629.5 691.3,632.5 690.3,635.5 689.3,638.5 688.2,641.5 687.2,644.5 686.2,647.5 685.3,650.5 684.3,653.5 683.3,656.5 682.4,659.5 681.5,662.5 680.5,665.5 679.6,668.5 678.7,671.5 677.8,674.5 677.0,677.5 676.1,680.5 675.3,683.5 674.4,686.5 673.6,689.5 672.8,692.5 672.0,695.5 671.1,698.5 670.3,701.5 669.5,704.5 668.7,707.5 667.9,710.5 667.2,713.5 666.4,716.5 665.7,719.5 665.1,722.5 664.4,725.5 663.8,728.5 663.2,731.5 662.6,734.5 662.0,737.5 661.5,740.5 661.0,743.5 660.7,746.5 660.3,749.5" fill="none" stroke="#00008b" stroke-width="1" />
<polyline points="105.6,50.5 104.0,53.5 102.3,56.5 100.7,59.5 99.0,62.5 97.4,65.5 95.8,68.5 94.1,71.5 92.5,74.5 90.9,77.5 89.3,80.5 87.7,83.5 86.1,86.5 84.5,89.5 83.0,92.5 81.4,95.5 79.8,98.5 78.3,101.5 76.7,104.5 75.2,107.5 73.6,110.5 72.1,113.5 70.6,116.5 69.1,119.5 67.6,122.5 66.1,125.5 64.6,128.5 63.1,131.5 61.6,134.5 60.1,137.5 58.7,140.5 57.2,143.5 55.8,146.5 54.3,149.5 52.9,152.5 51.5,155.5 50.0,158.5 48.6,161.5 47.2,164.5 45.8,167.5 44.4,170.5 43.1,173.5 41.7,176.5 40.3,179.5 39.0,182.5 37.6,185.5 36.3,188.5 35.0,191.5 33.6,194.5 32.3,197.5 31.0,200.5 29.7,203.5 28.4,206.5 27.2,209.5 25.9,212.5 24.6,215.5 23.4,218.5 22.1,221.5 20.9,224.5 19.7,227.5 18.5,230.5 17.3,233.5 16.1,236.5 14.9,239.5 13.7,242.5 12.6,245.5 11.4,248.5 10.3,251.5 9.1,254.5 8.0,257.5 6.9,260.5 5.8,263.5 4.7,266.5 3.6,269.5 2.5,272.5 1.5,275.5 0.4,278.5 -0.6,281.5 -1.7,284.5 -2.7,287.5 -3.7,290.5 -4.7,293.5 -5.7,296.5 -6.6,299.5 -7.6,302.5 -8.6,305.5 -9.5,308.5 -10.4,311.5 -11.3,314.5 -12.2,317.5 -13.1,320.5 -14.0,323.5 -14.9,326.5 -15.7,329.5 -16.6,332.5 -17.4,335.5 -18.2,338.5 -19.0,341.5 -19.8,344.5 -20.5,347.5 -21.3,350.5 -22.0,353.5 -22.8,356.5 -23.5,359.5 -24.2,362.5 -24.8,365.5 -25.5,368.5 -26.2,371.5 -26.8,374.5 -27.4,377.5 -28.0,380.5 -28.6,383.5 -29.2,386.5 -29.8,389.5 -30.3,392.5 -30.8,395.5 -31.3,398.5 -31.8,401.5 -32.3,404.5 -32.8,407.5 -33.2,410.5 -33.7,413.5 -34.1,416.5 -34.5,419.5 -34.8,422.5 -35.2,425.5 -35.6,428.5 -35.9,431.5 -36.2,434.5 -36.5,437.5 -36.8,440.5 -37.1,443.5 -37.3,446.5 -37.5,449.5 -37.7,452.5 -37.9,455.5 -38.1,458.5 -38.3,461.5 -38.4,464.5 -38.5,467.5 -38.6,470.5 -38.7,473.5 -38.7,476.5 -38.8,479.5 -38.8,482.5 -38.8,485.5 -38.7,488.5 -38.7,491.5 -38.6,494.5 -38.5,497.5 -38.4,500.5 -38.2,503.5 -38.1,506.5 -37.9,509.5 -37.7,512.5 -37.5,515.5 -37.2,518.5 -37.0,521.5 -36.7,524.5 -36.4,527.5 -36.0,530.5 -35.7,533.5 -35.3,536.5 -34.9,539.5 -34.5,542.5 -34.0,545.5 -33.5,548.5 -33.0,551.5 -32.5,554.5 -31.9,557.5 -31.4,560.5 -30.7,563.5 -30.1,566.5 -29.5,569.5 -28.8,572.5 -28.1,575.5 -27.3,578.5 -26.6,581.5 -25.8,584.5 -25.0,587.5 -24.2,590.5 -23.3,593.5 -22.5,596.5 -21.6,599.5 -20.6,602.5 -19.7,605.5 -18.7,608.5 -17.7,611.5 -16.6,614.5 -15.6,617.5 -14.5,620.5 -13.3,623.5 -12.1,626.5 -10.9,629.5 -9.6,632.5 -8.4,635.5 -7.0,638.5 -5.6,641.5 -4.2,644.5 -2.8,647.5 -1.3,650.5 0.2,653.5 1.8,656.5 3.4,659.5 5.0,662.5 6.7,665.5 8.4,668.5 10.1,671.5 11.9,674.5 13.7,677.5 15.6,680.5 17.5,683.5 19.4,686.5 21.4,689.5 23.4,692.5 25.4,695.5 27.5,698.5 29.5,701.5 31.6,704.5 33.7,707.5 35.8,710.5 38.1,713.5 40.4,716.5 42.8,719.5 45.2,722.5 47.8,725.5 50.4,728.5 53.1,731.5 55.8,734.5 58.6,737.5 61.5,740.5 64.6,743.5 67.9,746.5 71.3,749.5" fill="none" stroke="#8b0000" stroke-width="1" />
<polyline points="136.7,50.5 135.1,53.5 133.5,56.5 131.9,59.5 130.3,62.5 128.7,65.5 127.2,68.5 125.6,71.5 124.1,74.5 122.5,77.5 121.0,80.5 119.4,83.5 117.9,86.5 116.4,89.5 114.9,92.5 113.4,95.5 111.9,98.5 110.4,101.5 108.9,104.5 107.4,107.5 106.0,110.5 104.5,113.5 103.0,116.5 101.6,119.5 100.1,122.5 98.7,125.5 97.3,128.5 95.9,131.5 94.5,134.5 93.0,137.5 91.7,140.5 90.3,143.5 88.9,146.5 87.5,149.5 86.1,152.5 84.8,155.5 83.4,158.5 82.1,161.5 80.8,164.5 79.4,167.5 78.1,170.5 76.8,173.5 75.5,176.5 74.2,179.5 73.0,182.5 71.7,185.5 70.4,188.5 69.2,191.5 67.9,194.5 66.7,197.5 65.5,200.5 64.2,203.5 63.0,206.5 61.8,209.5 60.6,212.5 59.5,215.5 58.3,218.5 57.1,221.5 56.0,224.5 54.8,227.5 53.7,230.5 52.6,233.5 51.5,236.5 50.4,239.5 49.3,242.5 48.2,245.5 47.1,248.5 46.0,251.5 45.0,254.5 43.9,257.5 42.9,260.5 41.9,263.5 40.9,266.5 39.9,269.5 38.9,272.5 37.9,275.5 37.0,278.5 36.0,281.5 35.1,284.5 34.1,287.5 33.2,290.5 32.3,293.5 31.4,296.5 30.5,299.5 29.7,302.5 28.8,305.5 28.0,308.5 27.1,311.5 26.3,314.5 25.5,317.5 24.7,320.5 23.9,323.5 23.1,326.5 22.4,329.5 21.7,332.5 20.9,335.5 20.2,338.5 19.5,341.5 18.8,344.5 18.2,347.5 17.5,350.5 16.9,353.5 16.3,356.5 15.6,359.5 15.1,362.5 14.5,365.5 13.9,368.5 13.4,371.5 12.8,374.5 12.3,377.5 11.8,380.5 11.3,383.5 10.9,386.5 10.4,389.5 10.0,392.5 9.6,395.5 9.2,398.5 8.8,401.5 8.4,404.5 8.1,407.5 7.7,410.5 7.4,413.5 7.1,416.5 6.8,419.5 6.6,422.5 6.3,425.5 6.1,428.5 5.9,431.5 5.7,434.5 5.5,437.5 5.4,440.5 5.2,443.5 5.1,446.5 5.0,449.5 4.9,452.5 4.8,455.5 4.8,458.5 4.8,461.5 4.8,464.5 4.8,467.5 4.8,470.5 4.9,473.5 5.0,476.5 5.1,479.5 5.2,482.5 5.3,485.5 5.5,488.5 5.7,491.5 5.9,494.5 6.1,497.5 6.4,500.5 6.7,503.5 7.0,506.5 7.3,509.5 7.6,512.5 8.0,515.5 8.4,518.5 8.8,521.5 9.2,524.5 9.7,527.5 10.2,530.5 10.7,533.5 11.2,536.5 11.8,539.5 12.3,542.5 13.0,545.5 13.6,548.5 14.3,551.5 15.0,554.5 15.7,557.5 16.4,560.5 17.2,563.5 18.0,566.5 18.8,569.5 19.6,572.5 20.5,575.5 21.4,578.5 22.3,581.5 23.3,584.5 24.3,587.5 25.3,590.5 26.3,593.5 27.3,596.5 28.4,599.5 29.5,602.5 30.6,605.5 31.8,608.5 33.0,611.5 34.2,614.5 35.5,617.5 36.8,620.5 38.1,623.5 39.5,626.5 40.9,629.5 42.3,632.5 43.8,635.5 45.3,638.5 46.9,641.5 48.5,644.5 50.2,647.5 51.8,650.5 53.6,653.5 55.3,656.5 57.1,659.5 59.0,662.5 60.8,665.5 62.8,668.5 64.7,671.5 66.7,674.5 68.7,677.5 70.8,680.5 72.9,683.5 75.1,686.5 77.3,689.5 79.5,692.5 81.8,695.5 84.0,698.5 86.3,701.5 88.6,704.5 91.0,707.5 93.3,710.5 95.8,713.5 98.3,716.5 101.0,719.5 103.7,722.5 106.5,725.5 109.4,728.5 112.3,731.5 115.3,734.5 118.3,737.5 121.5,740.5 124.8,743.5 128.4,746.5 132.2,749.5" fill="none" stroke="#8b0000" stroke-width="1" />
<polyline points="167.7,50.5 166.2,53.5 164.7,56.5 163.1,59.5 161.6,62.5 160.1,65.5 158.6,68.5 157.1,71.5 155.6,74.5 154.1,77.5 152.7,80.5 151.2,83.5 149.7,86.5 148.3,89.5 146.8,92.5 145.4,95.5 143.9,98.5 142.5,101.5 141.1,104.5 139.7,107.5 138.3,110.5 136.9,113.5 135.5,116.5 134.1,119.5 132.7,122.5 131.4,125.5 130.0,128.5 128.6,131.5 127.3,134.5 126.0,137.5 124.6,140.5 123.3,143.5 122.0,146.5 120.7,149.5 119.4,152.5 118.1,155.5 116.8,158.5 115.6,161.5 114.3,164.5 113.1,167.5 111.8,170.5 110.6,173.5 109.4,176.5 108.1,179.5 106.9,182.5 105.7,185.5 104.6,188.5 103.4,191.5 102.2,194.5 101.0,197.5 99.9,200.5 98.7,203.5 97.6,206.5 96.5,209.5 95.4,212.5 94.3,215.5 93.2,218.5 92.1,221.5 91.0,224.5 90.0,227.5 88.9,230.5 87.9,233.5 86.8,236.5 85.8,239.5 84.8,242.5 83.8,245.5 82.8,248.5 81.8,251.5 80.9,254.5 79.9,257.5 79.0,260.5 78.0,263.5 77.1,266.5 76.2,269.5 75.3,272.5 74.4,275.5 73.5,278.5 72.7,281.5 71.8,284.5 71.0,287.5 70.1,290.5 69.3,293.5 68.5,296.5 67.7,299.5 66.9,302.5 66.2,305.5 65.4,308.5 64.7,311.5 64.0,314.5 63.2,317.5 62.5,320.5 61.8,323.5 61.2,326.5 60.5,329.5 59.9,332.5 59.2,335.5 58.6,338.5 58.0,341.5 57.4,344.5 56.9,347.5 56.3,350.5 55.8,353.5 55.3,356.5 54.8,359.5 54.3,362.5 53.8,365.5 53.3,368.5 52.9,371.5 52.5,374.5 52.1,377.5 51.7,380.5 51.3,383.5 51.0,386.5 50.6,389.5 50.3,392.5 50.0,395.5 49.7,398.5 49.4,401.5 49.2,404.5 48.9,407.5 48.7,410.5 48.5,413.5 48.3,416.5 48.2,419.5 48.0,422.5 47.9,425.5 47.8,428.5 47.7,431.5 47.6,434.5 47.5,437.5 47.5,440.5 47.5,443.5 47.5,446.5 47.5,449.5 47.5,452.5 47.6,455.5 47.7,458.5 47.8,461.5 47.9,464.5 48.1,467.5 48.2,470.5 48.4,473.5 48.6,476.5 48.9,479.5 49.1,482.5 49.4,485.5 49.7,488.5 50.0,491.5 50.4,494.5 50.8,497.5 51.2,500.5 51.6,503.5 52.0,506.5 52.5,509.5 53.0,512.5 53.5,515.5 54.0,518.5 54.6,521.5 55.2,524.5 55.8,527.5 56.4,530.5 57.0,533.5 57.7,536.5 58.4,539.5 59.2,542.5 59.9,545.5 60.7,548.5 61.6,551.5 62.4,554.5 63.3,557.5 64.2,560.5 65.1,563.5 66.1,566.5 67.1,569.5 68.1,572.5 69.1,575.5 70.2,578.5 71.3,581.5 72.4,584.5 73.5,587.5 74.7,590.5 75.9,593.5 77.1,596.5 78.4,599.5 79.6,602.5 81.0,605.5 82.3,608.5 83.7,611.5 85.1,614.5 86.5,617.5 88.0,620.5 89.5,623.5 91.1,626.5 92.7,629.5 94.3,632.5 96.0,635.5 97.7,638.5 99.5,641.5 101.3,644.5 103.1,647.5 105.0,650.5 106.9,653.5 108.9,656.5 110.9,659.5 112.9,662.5 115.0,665.5 117.1,668.5 119.3,671.5 121.5,674.5 123.8,677.5 126.1,680.5 128.4,683.5 130.8,686.5 133.2,689.5 135.6,692.5 138.1,695.5 140.6,698.5 143.1,701.5 145.7,704.5 148.2,707.5 150.8,710.5 153.5,713.5 156.3,716.5 159.2,719.5 162.2,722.5 165.2,725.5 168.3,728.5 171.5,731.5 174.8,734.5 178.1,737.5 181.5,740.5 185.1,743.5 189.0,746.5 193.0,749.5" fill="none" stroke="#8b0000" stroke-width="1" />
<polyline points="198.8,50.5 197.3,53.5 195.8,56.5 194.4,59.5 192.9,62.5 191.5,65.5 190.0,68.5 188.6,71.5 187.2,74.5 185.7,77.5 184.3,80.5 182.9,83.5 181.5,86.5 180.1,89.5 178.7,92.5 177.4,95.5 176.0,98.5 174.6,101.5 173.3,104.5 171.9,107.5 170.6,110.5 169.2,113.5 167.9,116.5 166.6,119.5 165.3,122.5 164.0,125.5 162.7,128.5 161.4,131.5 160.1,134.5 158.9,137.5 157.6,140.5 156.4,143.5 155.1,146.5 153.9,149.5 152.7,152.5 151.5,155.5 150.3,158.5 149.1,161.5 147.9,164.5 146.7,167.5 145.5,170.5 144.4,173.5 143.2,176.5 142.1,179.5 140.9,182.5 139.8,185.5 138.7,188.5 137.6,191.5 136.5,194.5 135.4,197.5 134.3,200.5 133.3,203.5 132.2,206.5 131.2,209.5 130.1,212.5 129.1,215.5 128.1,218.5 127.1,221.5 126.1,224.5 125.1,227.5 124.1,230.5 123.2,233.5 122.2,236.5 121.3,239.5 120.3,242.5 119.4,245.5 118.5,248.5 117.6,251.5 116.7,254.5 115.9,257.5 115.0,260.5 114.2,263.5 113.3,266.5 112.5,269.5 111.7,272.5 110.9,275.5 110.1,278.5 109.3,281.5 108.5,284.5 107.8,287.5 107.0,290.5 106.3,293.5 105.6,296.5 104.9,299.5 104.2,302.5 103.5,305.5 102.9,308.5 102.2,311.5 101.6,314.5 101.0,317.5 100.4,320.5 99.8,323.5 99.2,326.5 98.6,329.5 98.1,332.5 97.6,335.5 97.0,338.5 96.5,341.5 96.1,344.5 95.6,347.5 95.1,350.5 94.7,353.5 94.3,356.5 93.9,359.5 93.5,362.5 93.1,365.5 92.8,368.5 92.4,371.5 92.1,374.5 91.8,377.5 91.5,380.5 91.3,383.5 91.0,386.5 90.8,389.5 90.6,392.5 90.4,395.5 90.2,398.5 90.0,401.5 89.9,404.5 89.8,407.5 89.7,410.5 89.6,413.5 89.5,416.5 89.5,419.5 89.4,422.5 89.4,425.5 89.4,428.5 89.5,431.5 89.5,434.5 89.6,437.5 89.7,440.5 89.8,443.5 89.9,446.5 90.0,449.5 90.2,452.5 90.4,455.5 90.6,458.5 90.8,461.5 91.1,464.5 91.3,467.5 91.6,470.5 92.0,473.5 92.3,476.5 92.7,479.5 93.1,482.5 93.5,485.5 93.9,488.5 94.4,491.5 94.9,494.5 95.4,497.5 95.9,500.5 96.5,503.5 97.1,506.5 97.7,509.5 98.3,512.5 99.0,515.5 99.6,518.5 100.3,521.5 101.1,524.5 101.8,527.5 102.6,530.5 103.4,533.5 104.2,536.5 105.1,539.5 106.0,542.5 106.9,545.5 107.9,548.5 108.9,551.5 109.9,554.5 110.9,557.5 112.0,560.5 113.1,563.5 114.2,566.5 115.3,569.5 116.5,572.5 117.7,575.5 118.9,578.5 120.2,581.5 121.5,584.5 122.8,587.5 124.1,590.5 125.5,593.5 126.9,596.5 128.3,599.5 129.8,602.5 131.3,605.5 132.8,608.5 134.3,611.5 135.9,614.5 137.5,617.5 139.2,620.5 140.9,623.5 142.7,626.5 144.4,629.5 146.3,632.5 148.1,635.5 150.1,638.5 152.0,641.5 154.0,644.5 156.1,647.5 158.1,650.5 160.3,653.5 162.4,656.5 164.7,659.5 166.9,662.5 169.2,665.5 171.5,668.5 173.9,671.5 176.3,674.5 178.8,677.5 181.3,680.5 183.9,683.5 186.5,686.5 189.1,689.5 191.8,692.5 194.5,695.5 197.2,698.5 200.0,701.5 202.7,704.5 205.5,707.5 208.3,710.5 211.3,713.5 214.3,716.5 217.4,719.5 220.6,722.5 223.9,725.5 227.3,728.5 230.7,731.5 234.2,734.5 237.8,737.5 241.5,740.5 245.4,743.5 249.5,746.5 253.8,749.5" fill="none" stroke="#8b0000" stroke-width="1" />
<polyline points="229.8,50.5 228.4,53.5 227.0,56.5 225.6,59.5 224.2,62.5 222.8,65.5 221.4,68.5 220.1,71.5 218.7,74.5 217.3,77.5 216.0,80.5 214.6,83.5 213.3,86.5 212.0,89.5 210.7,92.5 209.3,95.5 208.0,98.5 206.7,101.5 205.4,104.5 204.2,107.5 202.9,110.5 201.6,113.5 200.4,116.5 199.1,119.5 197.9,122.5 196.6,125.5 195.4,128.5 194.2,131.5 193.0,134.5 191.8,137.5 190.6,140.5 189.4,143.5 188.3,146.5 187.1,149.5 185.9,152.5 184.8,155.5 183.7,158.5 182.5,161.5 181.4,164.5 180.3,167.5 179.2,170.5 178.1,173.5 177.0,176.5 176.0,179.5 174.9,182.5 173.9,185.5 172.8,188.5 171.8,191.5 170.8,194.5 169.8,197.5 168.8,200.5 167.8,203.5 166.8,206.5 165.8,209.5 164.9,212.5 163.9,215.5 163.0,218.5 162.1,221.5 161.1,224.5 160.2,227.5 159.3,230.5 158.5,233.5 157.6,236.5 156.7,239.5 155.9,242.5 155.0,245.5 154.2,248.5 153.4,251.5 152.6,254.5 151.8,257.5 151.0,260.5 150.3,263.5 149.5,266.5 148.8,269.5 148.1,272.5 147.3,275.5 146.6,278.5 146.0,281.5 145.3,284.5 144.6,287.5 144.0,290.5 143.3,293.5 142.7,296.5 142.1,299.5 141.5,302.5 140.9,305.5 140.3,308.5 139.8,311.5 139.2,314.5 138.7,317.5 138.2,320.5 137.7,323.5 137.2,326.5 136.8,329.5 136.3,332.5 135.9,335.5 135.5,338.5 135.1,341.5 134.7,344.5 134.3,347.5 134.0,350.5 133.6,353.5 133.3,356.5 133.0,359.5 132.7,362.5 132.5,365.5 132.2,368.5 132.0,371.5 131.8,374.5 131.6,377.5 131.4,380.5 131.2,383.5 131.1,386.5 131.0,389.5 130.9,392.5 130.8,395.5 130.7,398.5 130.7,401.5 130.6,404.5 130.6,407.5 130.6,410.5 130.7,413.5 130.7,416.5 130.8,419.5 130.9,422.5 131.0,425.5 131.1,428.5 131.3,431.5 131.4,434.5 131.6,437.5 131.8,440.5 132.0,443.5 132.3,446.5 132.6,449.5 132.8,452.5 133.2,455.5 133.5,458.5 133.8,461.5 134.2,464.5 134.6,467.5 135.1,470.5 135.5,473.5 136.0,476.5 136.5,479.5 137.0,482.5 137.6,485.5 138.1,488.5 138.7,491.5 139.4,494.5 140.0,497.5 140.7,500.5 141.4,503.5 142.1,506.5 142.9,509.5 143.6,512.5 144.4,515.5 145.3,518.5 146.1,521.5 147.0,524.5 147.9,527.5 148.8,530.5 149.8,533.5 150.8,536.5 151.8,539.5 152.8,542.5 153.9,545.5 155.0,548.5 156.1,551.5 157.3,554.5 158.5,557.5 159.7,560.5 161.0,563.5 162.3,566.5 163.6,569.5 164.9,572.5 166.3,575.5 167.7,578.5 169.1,581.5 170.6,584.5 172.1,587.5 173.6,590.5 175.1,593.5 176.7,596.5 178.3,599.5 179.9,602.5 181.6,605.5 183.3,608.5 185.0,611.5 186.8,614.5 188.6,617.5 190.4,620.5 192.3,623.5 194.2,626.5 196.2,629.5 198.2,632.5 200.3,635.5 202.4,638.5 204.6,641.5 206.8,644.5 209.0,647.5 211.3,650.5 213.6,653.5 216.0,656.5 218.4,659.5 220.9,662.5 223.4,665.5 225.9,668.5 228.5,671.5 231.2,674.5 233.8,677.5 236.6,680.5 239.3,683.5 242.2,686.5 245.0,689.5 247.9,692.5 250.9,695.5 253.8,698.5 256.8,701.5 259.8,704.5 262.8,707.5 265.9,710.5 269.0,713.5 272.3,716.5 275.6,719.5 279.1,722.5 282.6,725.5 286.3,728.5 289.9,731.5 293.7,734.5 297.6,737.5 301.5,740.5 305.7,743.5 310.1,746.5 314.7,749.5" fill="none" stroke="#8b0000" stroke-width="1" />
<polyline points="260.9,50.5 259.5,53.5 258.2,56.5 256.9,59.5 255.5,62.5 254.2,65.5 252.9,68.5 251.6,71.5 250.2,74.5 249.0,77.5 247.7,80.5 246.4,83.5 245.1,86.5 243.8,89.5 242.6,92.5 241.3,95.5 240.1,98.5 238.9,101.5 237.6,104.5 236.4,107.5 235.2,110.5 234.0,113.5 232.8,116.5 231.6,119.5 230.5,122.5 229.3,125.5 228.1,128.5 227.0,131.5 225.8,134.5 224.7,137.5 223.6,140.5 222.5,143.5 221.4,146.5 220.3,149.5 219.2,152.5 218.1,155.5 217.1,158.5 216.0,161.5 215.0,164.5 213.9,167.5 212.9,170.5 211.9,173.5 210.9,176.5 209.9,179.5 208.9,182.5 207.9,185.5 207.0,188.5 206.0,191.5 205.1,194.5 204.1,197.5 203.2,200.5 202.3,203.5 201.4,206.5 200.5,209.5 199.6,212.5 198.7,215.5 197.9,218.5 197.0,221.5 196.2,224.5 195.4,227.5 194.6,230.5 193.8,233.5 193.0,236.5 192.2,239.5 191.4,242.5 190.7,245.5 189.9,248.5 189.2,251.5 188.5,254.5 187.8,257.5 187.1,260.5 186.4,263.5 185.7,266.5 185.1,269.5 184.4,272.5 183.8,275.5 183.2,278.5 182.6,281.5 182.0,284.5 181.4,287.5 180.9,290.5 180.3,293.5 179.8,296.5 179.3,299.5 178.8,302.5 178.3,305.5 177.8,308.5 177.3,311.5 176.9,314.5 176.5,317.5 176.0,320.5 175.6,323.5 175.2,326.5 174.9,329.5 174.5,332.5 174.2,335.5 173.9,338.5 173.6,341.5 173.3,344.5 173.0,347.5 172.8,350.5 172.5,353.5 172.3,356.5 172.1,359.5 171.9,362.5 171.8,365.5 171.6,368.5 171.5,371.5 171.4,374.5 171.3,377.5 171.2,380.5 171.2,383.5 171.2,386.5 171.2,389.5 171.2,392.5 171.2,395.5 171.2,398.5 171.3,401.5 171.4,404.5 171.5,407.5 171.6,410.5 171.8,413.5 171.9,416.5 172.1,419.5 172.3,422.5 172.5,425.5 172.8,428.5 173.0,431.5 173.3,434.5 173.6,437.5 174.0,440.5 174.3,443.5 174.7,446.5 175.1,449.5 175.5,452.5 175.9,455.5 176.4,458.5 176.9,461.5 177.4,464.5 177.9,467.5 178.5,470.5 179.1,473.5 179.7,476.5 180.3,479.5 181.0,482.5 181.6,485.5 182.4,488.5 183.1,491.5 183.9,494.5 184.6,497.5 185.5,500.5 186.3,503.5 187.2,506.5 188.1,509.5 189.0,512.5 189.9,515.5 190.9,518.5 191.9,521.5 192.9,524.5 194.0,527.5 195.0,530.5 196.1,533.5 197.3,536.5 198.5,539.5 199.7,542.5 200.9,545.5 202.1,548.5 203.4,551.5 204.8,554.5 206.1,557.5 207.5,560.5 208.9,563.5 210.4,566.5 211.8,569.5 213.4,572.5 214.9,575.5 216.5,578.5 218.1,581.5 219.7,584.5 221.3,587.5 223.0,590.5 224.7,593.5 226.5,596.5 228.2,599.5 230.1,602.5 231.9,605.5 233.8,608.5 235.7,611.5 237.6,614.5 239.6,617.5 241.6,620.5 243.7,623.5 245.8,626.5 248.0,629.5 250.2,632.5 252.5,635.5 254.8,638.5 257.1,641.5 259.5,644.5 262.0,647.5 264.4,650.5 267.0,653.5 269.6,656.5 272.2,659.5 274.8,662.5 277.6,665.5 280.3,668.5 283.1,671.5 286.0,674.5 288.9,677.5 291.8,680.5 294.8,683.5 297.8,686.5 300.9,689.5 304.1,692.5 307.2,695.5 310.4,698.5 313.6,701.5 316.8,704.5 320.1,707.5 323.4,710.5 326.7,713.5 330.2,716.5 333.9,719.5 337.6,722.5 341.4,725.5 345.2,728.5 349.2,731.5 353.2,734.5 357.3,737.5 361.5,740.5 365.9,743.5 370.6,746.5 375.5,749.5" fill="none" stroke="#8b0000" stroke-width="1" />
<polyline points="292.0,50.5 290.7,53.5 289.4,56.5 288.1,59.5 286.8,62.5 285.5,65.5 284.3,68.5 283.0,71.5 281.8,74.5 280.6,77.5 279.3,80.5 278.1,83.5 276.9,86.5 275.7,89.5 274.5,92.5 273.3,95.5 272.1,98.5 271.0,101.5 269.8,104.5 268.7,107.5 267.5,110.5 266.4,113.5 265.3,116.5 264.1,119.5 263.0,122.5 261.9,125.5 260.8,128.5 259.8,131.5 258.7,134.5 257.6,137.5 256.6,140.5 255.5,143.5 254.5,146.5 253.5,149.5 252.5,152.5 251.5,155.5 250.5,158.5 249.5,161.5 248.5,164.5 247.5,167.5 246.6,170.5 245.7,173.5 244.7,176.5 243.8,179.5 242.9,182.5 242.0,185.5 241.1,188.5 240.2,191.5 239.3,194.5 238.5,197.5 237.6,200.5 236.8,203.5 236.0,206.5 235.2,209.5 234.4,212.5 233.6,215.5 232.8,218.5 232.0,221.5 231.3,224.5 230.5,227.5 229.8,230.5 229.1,233.5 228.3,236.5 227.7,239.5 227.0,242.5 226.3,245.5 225.6,248.5 225.0,251.5 224.4,254.5 223.7,257.5 223.1,260.5 222.5,263.5 222.0,266.5 221.4,269.5 220.8,272.5 220.3,275.5 219.8,278.5 219.2,281.5 218.7,284.5 218.3,287.5 217.8,290.5 217.3,293.5 216.9,296.5 216.5,299.5 216.0,302.5 215.6,305.5 215.3,308.5 214.9,311.5 214.5,314.5 214.2,317.5 213.9,320.5 213.6,323.5 213.3,326.5 213.0,329.5 212.7,332.5 212.5,335.5 212.3,338.5 212.1,341.5 211.9,344.5 211.7,347.5 211.6,350.5 211.4,353.5 211.3,356.5 211.2,359.5 211.2,362.5 211.1,365.5 211.1,368.5 211.0,371.5 211.0,374.5 211.1,377.5 211.1,380.5 211.2,383.5 211.2,386.5 211.3,389.5 211.5,392.5 211.6,395.5 211.7,398.5 211.9,401.5 212.1,404.5 212.3,407.5 212.6,410.5 212.8,413.5 213.1,416.5 213.4,419.5 213.7,422.5 214.1,425.5 214.4,428.5 214.8,431.5 215.2,434.5 215.7,437.5 216.1,440.5 216.6,443.5 217.1,446.5 217.6,449.5 218.1,452.5 218.7,455.5 219.3,458.5 219.9,461.5 220.5,464.5 221.2,467.5 221.9,470.5 222.6,473.5 223.3,476.5 224.1,479.5 224.9,482.5 225.7,485.5 226.6,488.5 227.4,491.5 228.3,494.5 229.3,497.5 230.2,500.5 231.2,503.5 232.2,506.5 233.3,509.5 234.3,512.5 235.4,515.5 236.5,518.5 237.7,521.5 238.8,524.5 240.0,527.5 241.3,530.5 242.5,533.5 243.8,536.5 245.1,539.5 246.5,542.5 247.9,545.5 249.3,548.5 250.7,551.5 252.2,554.5 253.7,557.5 255.3,560.5 256.9,563.5 258.5,566.5 260.1,569.5 261.8,572.5 263.5,575.5 265.2,578.5 267.0,581.5 268.8,584.5 270.6,587.5 272.5,590.5 274.3,593.5 276.3,596.5 278.2,599.5 280.2,602.5 282.2,605.5 284.3,608.5 286.3,611.5 288.5,614.5 290.6,617.5 292.9,620.5 295.1,623.5 297.4,626.5 299.8,629.5 302.2,632.5 304.6,635.5 307.1,638.5 309.7,641.5 312.3,644.5 314.9,647.5 317.6,650.5 320.3,653.5 323.1,656.5 325.9,659.5 328.8,662.5 331.7,665.5 334.7,668.5 337.7,671.5 340.8,674.5 343.9,677.5 347.1,680.5 350.3,683.5 353.5,686.5 356.8,689.5 360.2,692.5 363.6,695.5 367.0,698.5 370.4,701.5 373.8,704.5 377.3,707.5 380.9,710.5 384.5,713.5 388.2,716.5 392.1,719.5 396.0,722.5 400.1,725.5 404.2,728.5 408.4,731.5 412.7,734.5 417.0,737.5 421.5,740.5 426.2,743.5 431.2,746.5 436.4,749.5" fill="none" stroke="#8b0000" stroke-width="1" />
<polyline points="323.0,50.5 321.8,53.5 320.6,56.5 319.3,59.5 318.1,62.5 316.9,65.5 315.7,68.5 314.5,71.5 313.3,74.5 312.2,77.5 311.0,80.5 309.8,83.5 308.7,86.5 307.6,89.5 306.4,92.5 305.3,95.5 304.2,98.5 303.1,101.5 302.0,104.5 300.9,107.5 299.8,110.5 298.8,113.5 297.7,116.5 296.7,119.5 295.6,122.5 294.6,125.5 293.6,128.5 292.5,131.5 291.5,134.5 290.5,137.5 289.6,140.5 288.6,143.5 287.6,146.5 286.7,149.5 285.7,152.5 284.8,155.5 283.9,158.5 283.0,161.5 282.1,164.5 281.2,167.5 280.3,170.5 279.4,173.5 278.6,176.5 277.7,179.5 276.9,182.5 276.0,185.5 275.2,188.5 274.4,191.5 273.6,194.5 272.8,197.5 272.1,200.5 271.3,203.5 270.6,206.5 269.8,209.5 269.1,212.5 268.4,215.5 267.7,218.5 267.0,221.5 266.3,224.5 265.6,227.5 265.0,230.5 264.4,233.5 263.7,236.5 263.1,239.5 262.5,242.5 261.9,245.5 261.3,248.5 260.8,251.5 260.2,254.5 259.7,257.5 259.2,260.5 258.7,263.5 258.2,266.5 257.7,269.5 257.2,272.5 256.8,275.5 256.3,278.5 255.9,281.5 255.5,284.5 255.1,287.5 254.7,290.5 254.3,293.5 254.0,296.5 253.6,299.5 253.3,302.5 253.0,305.5 252.7,308.5 252.4,311.5 252.2,314.5 251.9,317.5 251.7,320.5 251.5,323.5 251.3,326.5 251.1,329.5 251.0,332.5 250.8,335.5 250.7,338.5 250.6,341.5 250.5,344.5 250.4,347.5 250.4,350.5 250.4,353.5 250.3,356.5 250.4,359.5 250.4,362.5 250.4,365.5 250.5,368.5 250.6,371.5 250.7,374.5 250.8,377.5 251.0,380.5 251.1,383.5 251.3,386.5 251.5,389.5 251.7,392.5 252.0,395.5 252.3,398.5 252.6,401.5 252.9,404.5 253.2,407.5 253.5,410.5 253.9,413.5 254.3,416.5 254.7,419.5 255.2,422.5 255.6,425.5 256.1,428.5 256.6,431.5 257.1,434.5 257.7,437.5 258.3,440.5 258.9,443.5 259.5,446.5 260.1,449.5 260.8,452.5 261.5,455.5 262.2,458.5 262.9,461.5 263.7,464.5 264.5,467.5 265.3,470.5 266.1,473.5 267.0,476.5 267.9,479.5 268.9,482.5 269.8,485.5 270.8,488.5 271.8,491.5 272.8,494.5 273.9,497.5 275.0,500.5 276.1,503.5 277.3,506.5 278.4,509.5 279.7,512.5 280.9,515.5 282.1,518.5 283.4,521.5 284.8,524.5 286.1,527.5 287.5,530.5 288.9,533.5 290.3,536.5 291.8,539.5 293.3,542.5 294.8,545.5 296.4,548.5 298.0,551.5 299.7,554.5 301.3,557.5 303.0,560.5 304.8,563.5 306.6,566.5 308.4,569.5 310.2,572.5 312.1,575.5 314.0,578.5 315.9,581.5 317.9,584.5 319.9,587.5 321.9,590.5 324.0,593.5 326.0,596.5 328.2,599.5 330.3,602.5 332.5,605.5 334.7,608.5 337.0,611.5 339.3,614.5 341.7,617.5 344.1,620.5 346.5,623.5 349.0,626.5 351.6,629.5 354.2,632.5 356.8,635.5 359.5,638.5 362.2,641.5 365.0,644.5 367.9,647.5 370.8,650.5 373.7,653.5 376.7,656.5 379.7,659.5 382.8,662.5 385.9,665.5 389.1,668.5 392.3,671.5 395.6,674.5 398.9,677.5 402.3,680.5 405.8,683.5 409.2,686.5 412.8,689.5 416.3,692.5 420.0,695.5 423.6,698.5 427.2,701.5 430.9,704.5 434.6,707.5 438.4,710.5 442.2,713.5 446.2,716.5 450.3,719.5 454.5,722.5 458.8,725.5 463.1,728.5 467.6,731.5 472.1,734.5 476.8,737.5 481.5,740.5 486.5,743.5 491.8,746.5 497.2,749.5" fill="none" stroke="#8b0000" stroke-width="1" />
<polyline points="354.1,50.5 352.9,53.5 351.7,56.5 350.6,59.5 349.4,62.5 348.3,65.5 347.1,68.5 346.0,71.5 344.9,74.5 343.8,77.5 342.7,80.5 341.6,83.5 340.5,86.5 339.4,89.5 338.3,92.5 337.3,95.5 336.2,98.5 335.2,101.5 334.2,104.5 333.2,107.5 332.1,110.5 331.1,113.5 330.1,116.5 329.2,119.5 328.2,122.5 327.2,125.5 326.3,128.5 325.3,131.5 324.4,134.5 323.5,137.5 322.6,140.5 321.6,143.5 320.8,146.5 319.9,149.5 319.0,152.5 318.1,155.5 317.3,158.5 316.4,161.5 315.6,164.5 314.8,167.5 314.0,170.5 313.2,173.5 312.4,176.5 311.6,179.5 310.9,182.5 310.1,185.5 309.4,188.5 308.6,191.5 307.9,194.5 307.2,197.5 306.5,200.5 305.8,203.5 305.1,206.5 304.5,209.5 303.8,212.5 303.2,215.5 302.6,218.5 302.0,221.5 301.4,224.5 300.8,227.5 300.2,230.5 299.7,233.5 299.1,236.5 298.6,239.5 298.1,242.5 297.5,245.5 297.1,248.5 296.6,251.5 296.1,254.5 295.7,257.5 295.2,260.5 294.8,263.5 294.4,266.5 294.0,269.5 293.6,272.5 293.2,275.5 292.9,278.5 292.5,281.5 292.2,284.5 291.9,287.5 291.6,290.5 291.3,293.5 291.1,296.5 290.8,299.5 290.6,302.5 290.4,305.5 290.2,308.5 290.0,311.5 289.8,314.5 289.7,317.5 289.5,320.5 289.4,323.5 289.3,326.5 289.2,329.5 289.2,332.5 289.1,335.5 289.1,338.5 289.1,341.5 289.1,344.5 289.1,347.5 289.2,350.5 289.3,353.5 289.4,356.5 289.5,359.5 289.6,362.5 289.8,365.5 289.9,368.5 290.1,371.5 290.3,374.5 290.6,377.5 290.8,380.5 291.1,383.5 291.4,386.5 291.7,389.5 292.0,392.5 292.4,395.5 292.8,398.5 293.2,401.5 293.6,404.5 294.0,407.5 294.5,410.5 295.0,413.5 295.5,416.5 296.0,419.5 296.6,422.5 297.2,425.5 297.8,428.5 298.4,431.5 299.1,434.5 299.7,437.5 300.4,440.5 301.1,443.5 301.9,446.5 302.6,449.5 303.4,452.5 304.2,455.5 305.1,458.5 305.9,461.5 306.8,464.5 307.8,467.5 308.7,470.5 309.7,473.5 310.7,476.5 311.7,479.5 312.8,482.5 313.9,485.5 315.0,488.5 316.2,491.5 317.3,494.5 318.5,497.5 319.8,500.5 321.0,503.5 322.3,506.5 323.6,509.5 325.0,512.5 326.4,515.5 327.8,518.5 329.2,521.5 330.7,524.5 332.2,527.5 333.7,530.5 335.3,533.5 336.8,536.5 338.5,539.5 340.1,542.5 341.8,545.5 343.6,548.5 345.3,551.5 347.1,554.5 349.0,557.5 350.8,560.5 352.7,563.5 354.7,566.5 356.6,569.5 358.6,572.5 360.7,575.5 362.7,578.5 364.8,581.5 367.0,584.5 369.1,587.5 371.3,590.5 373.6,593.5 375.8,596.5 378.1,599.5 380.5,602.5 382.8,605.5 385.2,608.5 387.7,611.5 390.2,614.5 392.7,617.5 395.3,620.5 397.9,623.5 400.6,626.5 403.3,629.5 406.1,632.5 409.0,635.5 411.9,638.5 414.8,641.5 417.8,644.5 420.8,647.5 423.9,650.5 427.0,653.5 430.2,656.5 433.5,659.5 436.8,662.5 440.1,665.5 443.5,668.5 446.9,671.5 450.4,674.5 454.0,677.5 457.6,680.5 461.2,683.5 464.9,686.5 468.7,689.5 472.5,692.5 476.3,695.5 480.2,698.5 484.0,701.5 487.9,704.5 491.9,707.5 495.9,710.5 500.0,713.5 504.2,716.5 508.5,719.5 513.0,722.5 517.5,725.5 522.1,728.5 526.8,731.5 531.6,734.5 536.5,737.5 541.5,740.5 546.7,743.5 552.3,746.5 558.1,749.5" fill="none" stroke="#8b0000" stroke-width="1" />
<polyline points="385.1,50.5 384.0,53.5 382.9,56.5 381.8,59.5 380.7,62.5 379.6,65.5 378.6,68.5 377.5,71.5 376.4,74.5 375.4,77.5 374.3,80.5 373.3,83.5 372.3,86.5 371.3,89.5 370.3,92.5 369.3,95.5 368.3,98.5 367.3,101.5 366.4,104.5 365.4,107.5 364.5,110.5 363.5,113.5 362.6,116.5 361.7,119.5 360.8,122.5 359.9,125.5 359.0,128.5 358.1,131.5 357.2,134.5 356.4,137.5 355.5,140.5 354.7,143.5 353.9,146.5 353.1,149.5 352.3,152.5 351.5,155.5 350.7,158.5 349.9,161.5 349.2,164.5 348.4,167.5 347.7,170.5 346.9,173.5 346.2,176.5 345.5,179.5 344.8,182.5 344.2,185.5 343.5,188.5 342.8,191.5 342.2,194.5 341.6,197.5 340.9,200.5 340.3,203.5 339.7,206.5 339.2,209.5 338.6,212.5 338.0,215.5 337.5,218.5 336.9,221.5 336.4,224.5 335.9,227.5 335.4,230.5 335.0,233.5 334.5,236.5 334.0,239.5 333.6,242.5 333.2,245.5 332.8,248.5 332.4,251.5 332.0,254.5 331.6,257.5 331.3,260.5 330.9,263.5 330.6,266.5 330.3,269.5 330.0,272.5 329.7,275.5 329.4,278.5 329.2,281.5 328.9,284.5 328.7,287.5 328.5,290.5 328.3,293.5 328.2,296.5 328.0,299.5 327.9,302.5 327.7,305.5 327.6,308.5 327.5,311.5 327.5,314.5 327.4,317.5 327.4,320.5 327.4,323.5 327.3,326.5 327.4,329.5 327.4,332.5 327.5,335.5 327.5,338.5 327.6,341.5 327.7,344.5 327.9,347.5 328.0,350.5 328.2,353.5 328.4,356.5 328.6,359.5 328.8,362.5 329.1,365.5 329.4,368.5 329.7,371.5 330.0,374.5 330.3,377.5 330.7,380.5 331.1,383.5 331.5,386.5 331.9,389.5 332.3,392.5 332.8,395.5 333.3,398.5 333.8,401.5 334.3,404.5 334.9,407.5 335.5,410.5 336.1,413.5 336.7,416.5 337.4,419.5 338.0,422.5 338.7,425.5 339.5,428.5 340.2,431.5 341.0,434.5 341.8,437.5 342.6,440.5 343.4,443.5 344.3,446.5 345.2,449.5 346.1,452.5 347.0,455.5 348.0,458.5 349.0,461.5 350.0,464.5 351.1,467.5 352.1,470.5 353.2,473.5 354.4,476.5 355.5,479.5 356.7,482.5 358.0,485.5 359.2,488.5 360.5,491.5 361.8,494.5 363.2,497.5 364.5,500.5 365.9,503.5 367.4,506.5 368.8,509.5 370.3,512.5 371.8,515.5 373.4,518.5 375.0,521.5 376.6,524.5 378.2,527.5 379.9,530.5 381.6,533.5 383.4,536.5 385.1,539.5 387.0,542.5 388.8,545.5 390.7,548.5 392.6,551.5 394.6,554.5 396.6,557.5 398.6,560.5 400.7,563.5 402.8,566.5 404.9,569.5 407.1,572.5 409.3,575.5 411.5,578.5 413.8,581.5 416.1,584.5 418.4,587.5 420.8,590.5 423.2,593.5 425.6,596.5 428.1,599.5 430.6,602.5 433.1,605.5 435.7,608.5 438.4,611.5 441.0,614.5 443.8,617.5 446.5,620.5 449.3,623.5 452.2,626.5 455.1,629.5 458.1,632.5 461.1,635.5 464.2,638.5 467.3,641.5 470.5,644.5 473.8,647.5 477.1,650.5 480.4,653.5 483.8,656.5 487.2,659.5 490.7,662.5 494.3,665.5 497.9,668.5 501.5,671.5 505.3,674.5 509.0,677.5 512.8,680.5 516.7,683.5 520.6,686.5 524.6,689.5 528.6,692.5 532.7,695.5 536.8,698.5 540.9,701.5 545.0,704.5 549.1,707.5 553.4,710.5 557.7,713.5 562.1,716.5 566.7,719.5 571.4,722.5 576.2,725.5 581.1,728.5 586.0,731.5 591.1,734.5 596.2,737.5 601.5,740.5 607.0,743.5 612.9,746.5 618.9,749.5" fill="none" stroke="#8b0000" stroke-width="1" />
<polyline points="416.2,50.5 415.1,53.5 414.1,56.5 413.0,59.5 412.0,62.5 411.0,65.5 410.0,68.5 409.0,71.5 408.0,74.5 407.0,77.5 406.0,80.5 405.0,83.5 404.1,86.5 403.1,89.5 402.2,92.5 401.3,95.5 400.3,98.5 399.4,101.5 398.5,104.5 397.6,107.5 396.8,110.5 395.9,113.5 395.0,116.5 394.2,119.5 393.3,122.5 392.5,125.5 391.7,128.5 390.9,131.5 390.1,134.5 389.3,137.5 388.5,140.5 387.8,143.5 387.0,146.5 386.3,149.5 385.5,152.5 384.8,155.5 384.1,158.5 383.4,161.5 382.7,164.5 382.0,167.5 381.4,170.5 380.7,173.5 380.1,176.5 379.4,179.5 378.8,182.5 378.2,185.5 377.6,188.5 377.0,191.5 376.5,194.5 375.9,197.5 375.4,200.5 374.8,203.5 374.3,206.5 373.8,209.5 373.3,212.5 372.8,215.5 372.4,218.5 371.9,221.5 371.5,224.5 371.1,227.5 370.6,230.5 370.2,233.5 369.9,236.5 369.5,239.5 369.1,242.5 368.8,245.5 368.5,248.5 368.2,251.5 367.9,254.5 367.6,257.5 367.3,260.5 367.0,263.5 366.8,266.5 366.6,269.5 366.4,272.5 366.2,275.5 366.0,278.5 365.8,281.5 365.7,284.5 365.6,287.5 365.4,290.5 365.3,293.5 365.3,296.5 365.2,299.5 365.1,302.5 365.1,305.5 365.1,308.5 365.1,311.5 365.1,314.5 365.2,317.5 365.2,320.5 365.3,323.5 365.4,326.5 365.5,329.5 365.6,332.5 365.8,335.5 365.9,338.5 366.1,341.5 366.3,344.5 366.6,347.5 366.8,350.5 367.1,353.5 367.4,356.5 367.7,359.5 368.0,362.5 368.4,365.5 368.8,368.5 369.2,371.5 369.6,374.5 370.1,377.5 370.5,380.5 371.0,383.5 371.5,386.5 372.1,389.5 372.6,392.5 373.2,395.5 373.8,398.5 374.4,401.5 375.1,404.5 375.8,407.5 376.4,410.5 377.2,413.5 377.9,416.5 378.7,419.5 379.5,422.5 380.3,425.5 381.1,428.5 382.0,431.5 382.9,434.5 383.8,437.5 384.7,440.5 385.7,443.5 386.7,446.5 387.7,449.5 388.7,452.5 389.8,455.5 390.9,458.5 392.0,461.5 393.2,464.5 394.3,467.5 395.5,470.5 396.8,473.5 398.1,476.5 399.4,479.5 400.7,482.5 402.0,485.5 403.4,488.5 404.9,491.5 406.3,494.5 407.8,497.5 409.3,500.5 410.8,503.5 412.4,506.5 414.0,509.5 415.7,512.5 417.3,515.5 419.0,518.5 420.8,521.5 422.5,524.5 424.3,527.5 426.1,530.5 428.0,533.5 429.9,536.5 431.8,539.5 433.8,542.5 435.8,545.5 437.8,548.5 439.9,551.5 442.0,554.5 444.2,557.5 446.4,560.5 448.6,563.5 450.9,566.5 453.2,569.5 455.5,572.5 457.9,575.5 460.3,578.5 462.7,581.5 465.2,584.5 467.7,587.5 470.2,590.5 472.8,593.5 475.4,596.5 478.0,599.5 480.7,602.5 483.5,605.5 486.2,608.5 489.0,611.5 491.9,614.5 494.8,617.5 497.7,620.5 500.7,623.5 503.8,626.5 506.9,629.5 510.1,632.5 513.3,635.5 516.6,638.5 519.9,641.5 523.3,644.5 526.7,647.5 530.2,650.5 533.8,653.5 537.4,656.5 541.0,659.5 544.7,662.5 548.5,665.5 552.3,668.5 556.1,671.5 560.1,674.5 564.1,677.5 568.1,680.5 572.2,683.5 576.3,686.5 580.5,689.5 584.8,692.5 589.1,695.5 593.4,698.5 597.7,701.5 602.0,704.5 606.4,707.5 610.9,710.5 615.4,713.5 620.1,716.5 624.9,719.5 629.9,722.5 634.9,725.5 640.0,728.5 645.3,731.5 650.6,734.5 656.0,737.5 661.5,740.5 667.3,743.5 673.4,746.5 679.7,749.5" fill="none" stroke="#8b0000" stroke-width="1" />
<polyline points="447.2,50.5 446.2,53.5 445.3,56.5 444.3,59.5 443.3,62.5 442.3,65.5 441.4,68.5 440.5,71.5 439.5,74.5 438.6,77.5 437.7,80.5 436.8,83.5 435.9,86.5 435.0,89.5 434.1,92.5 433.3,95.5 432.4,98.5 431.6,101.5 430.7,104.5 429.9,107.5 429.1,110.5 428.3,113.5 427.5,116.5 426.7,119.5 425.9,122.5 425.2,125.5 424.4,128.5 423.7,131.5 422.9,134.5 422.2,137.5 421.5,140.5 420.8,143.5 420.1,146.5 419.5,149.5 418.8,152.5 418.1,155.5 417.5,158.5 416.9,161.5 416.3,164.5 415.6,167.5 415.1,170.5 414.5,173.5 413.9,176.5 413.3,179.5 412.8,182.5 412.3,185.5 411.8,188.5 411.2,191.5 410.8,194.5 410.3,197.5 409.8,200.5 409.4,203.5 408.9,206.5 408.5,209.5 408.1,212.5 407.7,215.5 407.3,218.5 406.9,221.5 406.5,224.5 406.2,227.5 405.9,230.5 405.5,233.5 405.2,236.5 405.0,239.5 404.7,242.5 404.4,245.5 404.2,248.5 403.9,251.5 403.7,254.5 403.5,257.5 403.3,260.5 403.2,263.5 403.0,266.5 402.9,269.5 402.8,272.5 402.6,275.5 402.6,278.5 402.5,281.5 402.4,284.5 402.4,287.5 402.4,290.5 402.3,293.5 402.4,296.5 402.4,299.5 402.4,302.5 402.5,305.5 402.6,308.5 402.6,311.5 402.8,314.5 402.9,317.5 403.0,320.5 403.2,323.5 403.4,326.5 403.6,329.5 403.8,332.5 404.1,335.5 404.4,338.5 404.6,341.5 405.0,344.5 405.3,347.5 405.6,350.5 406.0,353.5 406.4,356.5 406.8,359.5 407.3,362.5 407.7,365.5 408.2,368.5 408.7,371.5 409.3,374.5 409.8,377.5 410.4,380.5 411.0,383.5 411.6,386.5 412.2,389.5 412.9,392.5 413.6,395.5 414.3,398.5 415.1,401.5 415.8,404.5 416.6,407.5 417.4,410.5 418.3,413.5 419.1,416.5 420.0,419.5 420.9,422.5 421.8,425.5 422.8,428.5 423.8,431.5 424.8,434.5 425.8,437.5 426.9,440.5 428.0,443.5 429.1,446.5 430.2,449.5 431.4,452.5 432.6,455.5 433.8,458.5 435.0,461.5 436.3,464.5 437.6,467.5 439.0,470.5 440.3,473.5 441.7,476.5 443.2,479.5 444.6,482.5 446.1,485.5 447.7,488.5 449.2,491.5 450.8,494.5 452.4,497.5 454.1,500.5 455.8,503.5 457.5,506.5 459.2,509.5 461.0,512.5 462.8,515.5 464.7,518.5 466.5,521.5 468.4,524.5 470.4,527.5 472.3,530.5 474.4,533.5 476.4,536.5 478.5,539.5 480.6,542.5 482.8,545.5 485.0,548.5 487.2,551.5 489.5,554.5 491.8,557.5 494.1,560.5 496.5,563.5 499.0,566.5 501.4,569.5 503.9,572.5 506.4,575.5 509.0,578.5 511.6,581.5 514.3,584.5 516.9,587.5 519.7,590.5 522.4,593.5 525.2,596.5 528.0,599.5 530.9,602.5 533.8,605.5 536.7,608.5 539.7,611.5 542.7,614.5 545.8,617.5 549.0,620.5 552.1,623.5 555.4,626.5 558.7,629.5 562.0,632.5 565.5,635.5 568.9,638.5 572.5,641.5 576.0,644.5 579.7,647.5 583.4,650.5 587.1,653.5 590.9,656.5 594.8,659.5 598.7,662.5 602.6,665.5 606.7,668.5 610.8,671.5 614.9,674.5 619.1,677.5 623.3,680.5 627.6,683.5 632.0,686.5 636.4,689.5 640.9,692.5 645.4,695.5 650.0,698.5 654.5,701.5 659.1,704.5 663.7,707.5 668.4,710.5 673.2,713.5 678.1,716.5 683.2,719.5 688.4,722.5 693.6,725.5 699.0,728.5 704.5,731.5 710.0,734.5 715.7,737.5 721.5,740.5 727.6,743.5 734.0,746.5 740.6,749.5" fill="none" stroke="#8b0000" stroke-width="1" />
<polyline points="478.3,50.5 477.4,53.5 476.4,56.5 475.5,59.5 474.6,62.5 473.7,65.5 472.8,68.5 471.9,71.5 471.1,74.5 470.2,77.5 469.3,80.5 468.5,83.5 467.7,86.5 466.9,89.5 466.0,92.5 465.2,95.5 464.4,98.5 463.7,101.5 462.9,104.5 462.1,107.5 461.4,110.5 460.6,113.5 459.9,116.5 459.2,119.5 458.5,122.5 457.8,125.5 457.1,128.5 456.4,131.5 455.8,134.5 455.1,137.5 454.5,140.5 453.9,143.5 453.2,146.5 452.6,149.5 452.1,152.5 451.5,155.5 450.9,158.5 450.3,161.5 449.8,164.5 449.3,167.5 448.7,170.5 448.2,173.5 447.7,176.5 447.3,179.5 446.8,182.5 446.3,185.5 445.9,188.5 445.5,191.5 445.0,194.5 444.6,197.5 444.2,200.5 443.9,203.5 443.5,206.5 443.1,209.5 442.8,212.5 442.5,215.5 442.2,218.5 441.9,221.5 441.6,224.5 441.3,227.5 441.1,230.5 440.8,233.5 440.6,236.5 440.4,239.5 440.2,242.5 440.0,245.5 439.9,248.5 439.7,251.5 439.6,254.5 439.5,257.5 439.4,260.5 439.3,263.5 439.2,266.5 439.2,269.5 439.1,272.5 439.1,275.5 439.1,278.5 439.1,281.5 439.2,284.5 439.2,287.5 439.3,290.5 439.3,293.5 439.4,296.5 439.6,299.5 439.7,302.5 439.8,305.5 440.0,308.5 440.2,311.5 440.4,314.5 440.6,317.5 440.9,320.5 441.1,323.5 441.4,326.5 441.7,329.5 442.1,332.5 442.4,335.5 442.8,338.5 443.2,341.5 443.6,344.5 444.0,347.5 444.5,350.5 444.9,353.5 445.4,356.5 445.9,359.5 446.5,362.5 447.1,365.5 447.6,368.5 448.3,371.5 448.9,374.5 449.6,377.5 450.2,380.5 450.9,383.5 451.7,386.5 452.4,389.5 453.2,392.5 454.0,395.5 454.8,398.5 455.7,401.5 456.6,404.5 457.5,407.5 458.4,410.5 459.3,413.5 460.3,416.5 461.3,419.5 462.3,422.5 463.4,425.5 464.5,428.5 465.6,431.5 466.7,434.5 467.8,437.5 469.0,440.5 470.2,443.5 471.5,446.5 472.7,449.5 474.0,452.5 475.3,455.5 476.7,458.5 478.1,461.5 479.5,464.5 480.9,467.5 482.4,470.5 483.9,473.5 485.4,476.5 487.0,479.5 488.6,482.5 490.2,485.5 491.9,488.5 493.6,491.5 495.3,494.5 497.0,497.5 498.8,500.5 500.7,503.5 502.5,506.5 504.4,509.5 506.3,512.5 508.3,515.5 510.3,518.5 512.3,521.5 514.4,524.5 516.4,527.5 518.6,530.5 520.7,533.5 522.9,536.5 525.2,539.5 527.4,542.5 529.8,545.5 532.1,548.5 534.5,551.5 536.9,554.5 539.4,557.5 541.9,560.5 544.5,563.5 547.0,566.5 549.7,569.5 552.3,572.5 555.0,575.5 557.8,578.5 560.5,581.5 563.4,584.5 566.2,587.5 569.1,590.5 572.0,593.5 575.0,596.5 578.0,599.5 581.0,602.5 584.1,605.5 587.2,608.5 590.4,611.5 593.6,614.5 596.9,617.5 600.2,620.5 603.5,623.5 607.0,626.5 610.5,629.5 614.0,632.5 617.6,635.5 621.3,638.5 625.0,641.5 628.8,644.5 632.6,647.5 636.5,650.5 640.5,653.5 644.5,656.5 648.5,659.5 652.7,662.5 656.8,665.5 661.1,668.5 665.4,671.5 669.7,674.5 674.1,677.5 678.6,680.5 683.1,683.5 687.7,686.5 692.3,689.5 697.0,692.5 701.8,695.5 706.6,698.5 711.3,701.5 716.1,704.5 721.0,707.5 725.9,710.5 730.9,713.5 736.1,716.5 741.4,719.5 746.8,722.5 752.4,725.5 758.0,728.5 763.7,731.5 769.5,734.5 775.4,737.5 781.5,740.5 787.8,743.5 794.5,746.5 801.4,749.5" fill="none" stroke="#8b0000" stroke-width="1" />
<polyline points="509.4,50.5 508.5,53.5 507.6,56.5 506.8,59.5 505.9,62.5 505.1,65.5 504.2,68.5 503.4,71.5 502.6,74.5 501.8,77.5 501.0,80.5 500.2,83.5 499.5,86.5 498.7,89.5 498.0,92.5 497.2,95.5 496.5,98.5 495.8,101.5 495.1,104.5 494.4,107.5 493.7,110.5 493.0,113.5 492.4,116.5 491.7,119.5 491.1,122.5 490.4,125.5 489.8,128.5 489.2,131.5 488.6,134.5 488.0,137.5 487.5,140.5 486.9,143.5 486.4,146.5 485.8,149.5 485.3,152.5 484.8,155.5 484.3,158.5 483.8,161.5 483.3,164.5 482.9,167.5 482.4,170.5 482.0,173.5 481.6,176.5 481.2,179.5 480.8,182.5 480.4,185.5 480.0,188.5 479.7,191.5 479.3,194.5 479.0,197.5 478.7,200.5 478.4,203.5 478.1,206.5 477.8,209.5 477.6,212.5 477.3,215.5 477.1,218.5 476.9,221.5 476.7,224.5 476.5,227.5 476.3,230.5 476.1,233.5 476.0,236.5 475.9,239.5 475.8,242.5 475.7,245.5 475.6,248.5 475.5,251.5 475.5,254.5 475.4,257.5 475.4,260.5 475.4,263.5 475.4,266.5 475.5,269.5 475.5,272.5 475.6,275.5 475.7,278.5 475.8,281.5 475.9,284.5 476.0,287.5 476.2,290.5 476.3,293.5 476.5,296.5 476.7,299.5 477.0,302.5 477.2,305.5 477.5,308.5 477.8,311.5 478.1,314.5 478.4,317.5 478.7,320.5 479.1,323.5 479.4,326.5 479.8,329.5 480.3,332.5 480.7,335.5 481.2,338.5 481.7,341.5 482.2,344.5 482.7,347.5 483.3,350.5 483.8,353.5 484.4,356.5 485.1,359.5 485.7,362.5 486.4,365.5 487.1,368.5 487.8,371.5 488.5,374.5 489.3,377.5 490.1,380.5 490.9,383.5 491.7,386.5 492.6,389.5 493.5,392.5 494.4,395.5 495.3,398.5 496.3,401.5 497.3,404.5 498.3,407.5 499.4,410.5 500.4,413.5 501.5,416.5 502.6,419.5 503.8,422.5 504.9,425.5 506.1,428.5 507.4,431.5 508.6,434.5 509.9,437.5 511.2,440.5 512.5,443.5 513.9,446.5 515.2,449.5 516.7,452.5 518.1,455.5 519.6,458.5 521.1,461.5 522.6,464.5 524.2,467.5 525.8,470.5 527.4,473.5 529.1,476.5 530.8,479.5 532.5,482.5 534.3,485.5 536.1,488.5 537.9,491.5 539.8,494.5 541.7,497.5 543.6,500.5 545.6,503.5 547.6,506.5 549.6,509.5 551.7,512.5 553.8,515.5 555.9,518.5 558.1,521.5 560.3,524.5 562.5,527.5 564.8,530.5 567.1,533.5 569.4,536.5 571.8,539.5 574.3,542.5 576.7,545.5 579.2,548.5 581.8,551.5 584.4,554.5 587.0,557.5 589.7,560.5 592.4,563.5 595.1,566.5 597.9,569.5 600.8,572.5 603.6,575.5 606.5,578.5 609.5,581.5 612.5,584.5 615.5,587.5 618.5,590.5 621.6,593.5 624.8,596.5 627.9,599.5 631.1,602.5 634.4,605.5 637.7,608.5 641.0,611.5 644.4,614.5 647.9,617.5 651.4,620.5 655.0,623.5 658.6,626.5 662.2,629.5 666.0,632.5 669.8,635.5 673.6,638.5 677.6,641.5 681.5,644.5 685.6,647.5 689.7,650.5 693.8,653.5 698.0,656.5 702.3,659.5 706.6,662.5 711.0,665.5 715.5,668.5 720.0,671.5 724.5,674.5 729.2,677.5 733.8,680.5 738.6,683.5 743.4,686.5 748.3,689.5 753.2,692.5 758.2,695.5 763.1,698.5 768.1,701.5 773.2,704.5 778.2,707.5 783.4,710.5 788.7,713.5 794.1,716.5 799.6,719.5 805.3,722.5 811.1,725.5 816.9,728.5 822.9,731.5 829.0,734.5 835.2,737.5 841.5,740.5 848.1,743.5 855.1,746.5 862.3,749.5" fill="none" stroke="#8b0000" stroke-width="1" />
<polyline points="540.4,50.5 539.6,53.5 538.8,56.5 538.0,59.5 537.2,62.5 536.4,65.5 535.7,68.5 534.9,71.5 534.2,74.5 533.4,77.5 532.7,80.5 532.0,83.5 531.3,86.5 530.6,89.5 529.9,92.5 529.2,95.5 528.6,98.5 527.9,101.5 527.3,104.5 526.6,107.5 526.0,110.5 525.4,113.5 524.8,116.5 524.2,119.5 523.7,122.5 523.1,125.5 522.5,128.5 522.0,131.5 521.5,134.5 521.0,137.5 520.5,140.5 520.0,143.5 519.5,146.5 519.0,149.5 518.6,152.5 518.1,155.5 517.7,158.5 517.3,161.5 516.9,164.5 516.5,167.5 516.1,170.5 515.8,173.5 515.4,176.5 515.1,179.5 514.8,182.5 514.5,185.5 514.2,188.5 513.9,191.5 513.6,194.5 513.4,197.5 513.1,200.5 512.9,203.5 512.7,206.5 512.5,209.5 512.3,212.5 512.1,215.5 512.0,218.5 511.8,221.5 511.7,224.5 511.6,227.5 511.5,230.5 511.4,233.5 511.4,236.5 511.3,239.5 511.3,242.5 511.3,245.5 511.3,248.5 511.3,251.5 511.3,254.5 511.4,257.5 511.5,260.5 511.5,263.5 511.7,266.5 511.8,269.5 511.9,272.5 512.1,275.5 512.2,278.5 512.4,281.5 512.6,284.5 512.8,287.5 513.1,290.5 513.4,293.5 513.6,296.5 513.9,299.5 514.2,302.5 514.6,305.5 514.9,308.5 515.3,311.5 515.7,314.5 516.1,317.5 516.5,320.5 517.0,323.5 517.5,326.5 518.0,329.5 518.5,332.5 519.0,335.5 519.6,338.5 520.2,341.5 520.8,344.5 521.4,347.5 522.1,350.5 522.8,353.5 523.5,356.5 524.2,359.5 524.9,362.5 525.7,365.5 526.5,368.5 527.3,371.5 528.2,374.5 529.1,377.5 529.9,380.5 530.9,383.5 531.8,386.5 532.8,389.5 533.8,392.5 534.8,395.5 535.9,398.5 536.9,401.5 538.0,404.5 539.2,407.5 540.3,410.5 541.5,413.5 542.7,416.5 543.9,419.5 545.2,422.5 546.5,425.5 547.8,428.5 549.1,431.5 550.5,434.5 551.9,437.5 553.3,440.5 554.8,443.5 556.3,446.5 557.8,449.5 559.3,452.5 560.9,455.5 562.5,458.5 564.1,461.5 565.8,464.5 567.5,467.5 569.2,470.5 571.0,473.5 572.8,476.5 574.6,479.5 576.5,482.5 578.4,485.5 580.3,488.5 582.3,491.5 584.3,494.5 586.3,497.5 588.4,500.5 590.5,503.5 592.6,506.5 594.8,509.5 597.0,512.5 599.3,515.5 601.5,518.5 603.8,521.5 606.2,524.5 608.6,527.5 611.0,530.5 613.5,533.5 616.0,536.5 618.5,539.5 621.1,542.5 623.7,545.5 626.4,548.5 629.1,551.5 631.8,554.5 634.6,557.5 637.5,560.5 640.3,563.5 643.2,566.5 646.2,569.5 649.2,572.5 652.2,575.5 655.3,578.5 658.4,581.5 661.6,584.5 664.7,587.5 668.0,590.5 671.2,593.5 674.5,596.5 677.9,599.5 681.3,602.5 684.7,605.5 688.2,608.5 691.7,611.5 695.3,614.5 698.9,617.5 702.6,620.5 706.4,623.5 710.2,626.5 714.0,629.5 718.0,632.5 721.9,635.5 726.0,638.5 730.1,641.5 734.3,644.5 738.5,647.5 742.8,650.5 747.2,653.5 751.6,656.5 756.1,659.5 760.6,662.5 765.2,665.5 769.8,668.5 774.6,671.5 779.3,674.5 784.2,677.5 789.1,680.5 794.1,683.5 799.1,686.5 804.2,689.5 809.3,692.5 814.5,695.5 819.7,698.5 825.0,701.5 830.2,704.5 835.5,707.5 840.9,710.5 846.4,713.5 852.0,716.5 857.8,719.5 863.8,722.5 869.8,725.5 875.9,728.5 882.1,731.5 888.5,734.5 894.9,737.5 901.5,740.5 908.4,743.5 915.6,746.5 923.1,749.5" fill="none" stroke="#8b0000" stroke-width="1" />
<polyline points="571.5,50.5 570.7,53.5 570.0,56.5 569.2,59.5 568.5,62.5 567.8,65.5 567.1,68.5 566.4,71.5 565.7,74.5 565.0,77.5 564.4,80.5 563.7,83.5 563.1,86.5 562.4,89.5 561.8,92.5 561.2,95.5 560.6,98.5 560.0,101.5 559.4,104.5 558.9,107.5 558.3,110.5 557.8,113.5 557.3,116.5 556.7,119.5 556.2,122.5 555.7,125.5 555.3,128.5 554.8,131.5 554.3,134.5 553.9,137.5 553.4,140.5 553.0,143.5 552.6,146.5 552.2,149.5 551.8,152.5 551.5,155.5 551.1,158.5 550.8,161.5 550.4,164.5 550.1,167.5 549.8,170.5 549.5,173.5 549.3,176.5 549.0,179.5 548.7,182.5 548.5,185.5 548.3,188.5 548.1,191.5 547.9,194.5 547.7,197.5 547.5,200.5 547.4,203.5 547.3,206.5 547.1,209.5 547.0,212.5 547.0,215.5 546.9,218.5 546.8,221.5 546.8,224.5 546.7,227.5 546.7,230.5 546.7,233.5 546.8,236.5 546.8,239.5 546.8,242.5 546.9,245.5 547.0,248.5 547.1,251.5 547.2,254.5 547.4,257.5 547.5,260.5 547.7,263.5 547.9,266.5 548.1,269.5 548.3,272.5 548.5,275.5 548.8,278.5 549.1,281.5 549.4,284.5 549.7,287.5 550.0,290.5 550.4,293.5 550.7,296.5 551.1,299.5 551.5,302.5 551.9,305.5 552.4,308.5 552.9,311.5 553.3,314.5 553.9,317.5 554.4,320.5 554.9,323.5 555.5,326.5 556.1,329.5 556.7,332.5 557.3,335.5 558.0,338.5 558.7,341.5 559.4,344.5 560.1,347.5 560.9,350.5 561.7,353.5 562.5,356.5 563.3,359.5 564.2,362.5 565.0,365.5 565.9,368.5 566.9,371.5 567.8,374.5 568.8,377.5 569.8,380.5 570.8,383.5 571.9,386.5 573.0,389.5 574.1,392.5 575.2,395.5 576.4,398.5 577.6,401.5 578.8,404.5 580.0,407.5 581.3,410.5 582.6,413.5 583.9,416.5 585.3,419.5 586.6,422.5 588.0,425.5 589.5,428.5 590.9,431.5 592.4,434.5 593.9,437.5 595.5,440.5 597.1,443.5 598.7,446.5 600.3,449.5 601.9,452.5 603.6,455.5 605.4,458.5 607.1,461.5 608.9,464.5 610.8,467.5 612.6,470.5 614.5,473.5 616.4,476.5 618.4,479.5 620.4,482.5 622.4,485.5 624.5,488.5 626.6,491.5 628.8,494.5 630.9,497.5 633.1,500.5 635.4,503.5 637.7,506.5 640.0,509.5 642.3,512.5 644.7,515.5 647.2,518.5 649.6,521.5 652.1,524.5 654.6,527.5 657.2,530.5 659.8,533.5 662.5,536.5 665.2,539.5 667.9,542.5 670.7,545.5 673.5,548.5 676.4,551.5 679.3,554.5 682.2,557.5 685.2,560.5 688.3,563.5 691.3,566.5 694.5,569.5 697.6,572.5 700.8,575.5 704.1,578.5 707.3,581.5 710.6,584.5 714.0,587.5 717.4,590.5 720.8,593.5 724.3,596.5 727.8,599.5 731.4,602.5 735.0,605.5 738.7,608.5 742.4,611.5 746.1,614.5 750.0,617.5 753.8,620.5 757.8,623.5 761.8,626.5 765.8,629.5 769.9,632.5 774.1,635.5 778.4,638.5 782.7,641.5 787.0,644.5 791.5,647.5 796.0,650.5 800.5,653.5 805.1,656.5 809.8,659.5 814.6,662.5 819.4,665.5 824.2,668.5 829.2,671.5 834.2,674.5 839.2,677.5 844.3,680.5 849.5,683.5 854.8,686.5 860.1,689.5 865.5,692.5 870.9,695.5 876.3,698.5 881.8,701.5 887.3,704.5 892.8,707.5 898.4,710.5 904.1,713.5 910.0,716.5 916.0,719.5 922.2,722.5 928.5,725.5 934.9,728.5 941.3,731.5 947.9,734.5 954.7,737.5 961.5,740.5 968.6,743.5 976.2,746.5 984.0,749.5" fill="none" stroke="#8b0000" stroke-width="1" />
</g>
<g shape-rendering="crispEdges">
<rect x="61.5" y="50.5" width="600" height="699" fill="none" stroke="#fff"/>
<line x1="56.0" y1="50.5" x2="61.0" y2="50.5" stroke="#fff" stroke-width="1"/>
<line x1="662.0" y1="50.5" x2="667.0" y2="50.5" stroke="#fff" stroke-width="1"/>
<line x1="56.0" y1="321.5" x2="61.0" y2="321.5" stroke="#fff" stroke-width="1"/>
<line x1="662.0" y1="321.5" x2="667.0" y2="321.5" stroke="#fff" stroke-width="1"/>
<line x1="56.0" y1="449.5" x2="61.0" y2="449.5" stroke="#fff" stroke-width="1"/>
<line x1="662.0" y1="449.5" x2="667.0" y2="449.5" stroke="#fff" stroke-width="1"/>
<line x1="56.0" y1="529.5" x2="61.0" y2="529.5" stroke="#fff" stroke-width="1"/>
<line x1="662.0" y1="529.5" x2="667.0" y2="529.5" stroke="#fff" stroke-width="1"/>
<line x1="56.0" y1="586.5" x2="61.0" y2="586.5" stroke="#fff" stroke-width="1"/>
<line x1="662.0" y1="586.5" x2="667.0" y2="586.5" stroke="#fff" stroke-width="1"/>
<line x1="56.0" y1="630.5" x2="61.0" y2="630.5" stroke="#fff" stroke-width="1"/>
<line x1="662.0" y1="630.5" x2="667.0" y2="630.5" stroke="#fff" stroke-width="1"/>
<line x1="56.0" y1="665.5" x2="61.0" y2="665.5" stroke="#fff" stroke-width="1"/>
<line x1="662.0" y1="665.5" x2="667.0" y2="665.5" stroke="#fff" stroke-width="1"/>
<line x1="56.0" y1="694.5" x2="61.0" y2="694.5" stroke="#fff" stroke-width="1"/>
<line x1="662.0" y1="694.5" x2="667.0" y2="694.5" stroke="#fff" stroke-width="1"/>
<line x1="56.0" y1="719.5" x2="61.0" y2="719.5" stroke="#fff" stroke-width="1"/>
<line x1="662.0" y1="719.5" x2="667.0" y2="719.5" stroke="#fff" stroke-width="1"/>
<line x1="56.0" y1="740.5" x2="61.0" y2="740.5" stroke="#fff" stroke-width="1"/>
<line x1="662.0" y1="740.5" x2="667.0" y2="740.5" stroke="#fff" stroke-width="1"/>
<line x1="61.5" y1="749.0" x2="61.5" y2="755.0" stroke="#fff" stroke-width="1"/>
<line x1="61.5" y1="788.0" x2="61.5" y2="792.0" stroke="#fff" stroke-width="1"/>
<line x1="61.5" y1="826.0" x2="61.5" y2="830.0" stroke="#fff" stroke-width="1"/>
<line x1="121.5" y1="749.0" x2="121.5" y2="755.0" stroke="#fff" stroke-width="1"/>
<line x1="121.5" y1="788.0" x2="121.5" y2="792.0" stroke="#fff" stroke-width="1"/>
<line x1="121.5" y1="826.0" x2="121.5" y2="830.0" stroke="#fff" stroke-width="1"/>
<line x1="181.5" y1="749.0" x2="181.5" y2="755.0" stroke="#fff" stroke-width="1"/>
<line x1="181.5" y1="788.0" x2="181.5" y2="792.0" stroke="#fff" stroke-width="1"/>
<line x1="181.5" y1="826.0" x2="181.5" y2="830.0" stroke="#fff" stroke-width="1"/>
<line x1="241.5" y1="749.0" x2="241.5" y2="755.0" stroke="#fff" stroke-width="1"/>
<line x1="241.5" y1="788.0" x2="241.5" y2="792.0" stroke="#fff" stroke-width="1"/>
<line x1="241.5" y1="826.0" x2="241.5" y2="830.0" stroke="#fff" stroke-width="1"/>
<line x1="301.5" y1="749.0" x2="301.5" y2="755.0" stroke="#fff" stroke-width="1"/>
<line x1="301.5" y1="788.0" x2="301.5" y2="792.0" stroke="#fff" stroke-width="1"/>
<line x1="301.5" y1="826.0" x2="301.5" y2="830.0" stroke="#fff" stroke-width="1"/>
<line x1="361.5" y1="749.0" x2="361.5" y2="755.0" stroke="#fff" stroke-width="1"/>
<line x1="361.5" y1="788.0" x2="361.5" y2="792.0" stroke="#fff" stroke-width="1"/>
<line x1="361.5" y1="826.0" x2="361.5" y2="830.0" stroke="#fff" stroke-width="1"/>
<line x1="421.5" y1="749.0" x2="421.5" y2="755.0" stroke="#fff" stroke-width="1"/>
<line x1="421.5" y1="788.0" x2="421.5" y2="792.0" stroke="#fff" stroke-width="1"/>
<line x1="421.5" y1="826.0" x2="421.5" y2="830.0" stroke="#fff" stroke-width="1"/>
<line x1="481.5" y1="749.0" x2="481.5" y2="755.0" stroke="#fff" stroke-width="1"/>
<line x1="481.5" y1="788.0" x2="481.5" y2="792.0" stroke="#fff" stroke-width="1"/>
<line x1="481.5" y1="826.0" x2="481.5" y2="830.0" stroke="#fff" stroke-width="1"/>
<line x1="541.5" y1="749.0" x2="541.5" y2="755.0" stroke="#fff" stroke-width="1"/>
<line x1="541.5" y1="788.0" x2="541.5" y2="792.0" stroke="#fff" stroke-width="1"/>
<line x1="541.5" y1="826.0" x2="541.5" y2="830.0" stroke="#fff" stroke-width="1"/>
<line x1="601.5" y1="749.0" x2="601.5" y2="755.0" stroke="#fff" stroke-width="1"/>
<line x1="601.5" y1="788.0" x2="601.5" y2="792.0" stroke="#fff" stroke-width="1"/>
<line x1="601.5" y1="826.0" x2="601.5" y2="830.0" stroke="#fff" stroke-width="1"/>
<line x1="661.5" y1="749.0" x2="661.5" y2="755.0" stroke="#fff" stroke-width="1"/>
<line x1="661.5" y1="788.0" x2="661.5" y2="792.0" stroke="#fff" stroke-width="1"/>
<line x1="661.5" y1="826.0" x2="661.5" y2="830.0" stroke="#fff" stroke-width="1"/>
<line x1="61.5" y1="863.0" x2="61.5" y2="867.0" stroke="#fff" stroke-width="1"/>
<line x1="136.5" y1="863.0" x2="136.5" y2="867.0" stroke="#fff" stroke-width="1"/>
<line x1="211.5" y1="863.0" x2="211.5" y2="867.0" stroke="#fff" stroke-width="1"/>
<line x1="286.5" y1="863.0" x2="286.5" y2="867.0" stroke="#fff" stroke-width="1"/>
<line x1="361.5" y1="863.0" x2="361.5" y2="867.0" stroke="#fff" stroke-width="1"/>
<line x1="436.5" y1="863.0" x2="436.5" y2="867.0" stroke="#fff" stroke-width="1"/>
<line x1="511.5" y1="863.0" x2="511.5" y2="867.0" stroke="#fff" stroke-width="1"/>
<line x1="586.5" y1="863.0" x2="586.5" y2="867.0" stroke="#fff" stroke-width="1"/>
<line x1="661.5" y1="863.0" x2="661.5" y2="867.0" stroke="#fff" stroke-width="1"/>
</g>
<g clip-path="url(#cp)" shape-rendering="crispEdges">
<polyline points="61.5,670.9 122.9,680.2 61.5,687.6" fill="none" stroke="#d06800" stroke-width="1" />
<polyline points="61.5,699.0 116.8,701.6 188.5,703.2 206.0,703.4" fill="none" stroke="#d06800" stroke-width="1" />
<polyline points="69.3,731.5 120.3,727.6 138.4,724.9 140.4,711.7 159.5,707.8 183.2,706.5" fill="none" stroke="#d06800" stroke-width="1" />
<polyline points="61.5,704.3 76.4,706.9 123.8,710.4 141.0,710.8 141.0,718.3 147.0,725.0 176.7,727.5 212.2,728.2 300.0,729.5 326.0,730.3 373.0,731.0" fill="none" stroke="#ff0" stroke-width="1" />
<polyline points="290.0,659.4 285.0,665.0 293.8,671.3 317.8,686.7 282.5,693.5 276.2,695.6 254.7,699.4 237.0,702.9 215.2,707.8 191.1,710.4 154.5,710.4 154.5,715.0 185.9,718.3 209.6,721.6 212.2,724.9 191.0,727.5 207.0,729.5 214.0,731.0" fill="none" stroke="#c8c800" stroke-width="1" />
<line x1="61.0" y1="704.5" x2="626.0" y2="704.5" stroke="#f0f" stroke-width="1"/>
<polyline points="157.5,50.5 181.4,67.9 211.3,88.6 181.4,104.5 175.6,107.0 163.0,115.4 146.1,129.3 163.0,136.1 187.8,146.2 193.3,149.2 247.1,171.4 247.1,180.3 187.8,202.3 223.6,210.3 247.1,215.7 259.2,218.2 283.0,225.0 295.6,230.8 277.4,242.2 264.8,251.8 259.2,254.3 277.4,272.7 289.6,284.1 331.7,321.5 343.9,326.5 355.7,334.6 331.7,357.9 337.5,363.7 344.4,369.2 313.3,383.1 295.6,394.5 265.6,409.4 235.8,424.3 247.1,446.5 247.1,458.4 253.4,470.3 253.4,497.8 253.4,507.9 259.2,516.7 259.2,529.4 271.1,551.6 271.1,556.4 277.4,562.2 277.4,566.0 283.2,579.1 271.1,586.2 223.1,592.5 247.1,596.3 283.2,602.1 235.8,608.9 223.1,611.4 229.4,628.4 235.8,642.5 235.8,646.1 241.3,653.1 247.1,658.9 247.1,665.8 247.1,671.3 247.1,680.2 247.1,687.2 205.4,693.5 175.1,699.4 156.2,703.6 134.4,706.9 97.5,709.0 97.5,715.7 73.7,718.3 73.7,725.4 86.0,725.4 72.8,726.5 72.8,730.6" fill="none" stroke="#0f0" stroke-width="1" />
<polyline points="137.8,50.5 162.0,67.4 211.0,88.6 225.7,105.0 229.0,107.5 199.6,115.4 156.2,129.3 129.2,136.1 81.7,146.2 84.2,149.2 158.0,171.4 183.2,177.3 195.3,180.8 121.6,202.3 108.7,210.3 131.4,215.7 144.3,218.2 170.1,225.0 185.2,230.8 176.4,242.2 171.3,251.0 167.6,254.3 190.3,272.7 206.7,284.1 260.5,321.5 271.9,326.5 281.2,334.6 273.6,357.9 266.6,363.7 259.2,369.2 233.2,383.1 218.6,394.5 176.4,409.4 139.8,424.3 156.7,446.5 156.2,458.4 160.5,470.3 155.4,497.8 153.7,507.9 156.9,516.7 155.4,529.4 160.0,551.6 158.7,556.4 162.5,562.2 163.8,579.9 147.4,586.2 120.3,592.5 127.1,596.3 149.1,602.1 120.3,610.9 135.5,628.4 147.4,642.5 154.9,646.1 158.7,653.1 166.3,659.4 170.1,665.8 161.2,671.3 146.1,680.2 134.7,687.2 132.2,694.3 143.6,699.4 130.9,703.6 134.4,706.9 155.4,709.5 180.0,711.3 185.3,716.6 209.9,718.3 212.5,722.7 225.7,725.4 208.2,727.1 214.3,731.2" fill="none" stroke="#ff0080" stroke-width="1" />
<polyline points="466.7,50.5 456.2,80.0 449.6,106.4 440.4,143.3 432.5,188.1 427.2,230.3 425.4,250.0 424.6,297.4 425.9,326.4 429.8,355.4 435.1,392.3 440.4,424.0 447.0,455.6 450.9,470.0 461.5,514.8 468.1,551.7 473.3,586.0 477.3,612.3 479.9,638.7 481.8,665.0 482.6,680.9 481.9,690.5 541.6,730.7" fill="none" stroke="#ffa0ff" stroke-width="1" />
<polyline points="449.6,50.5 439.0,90.6 425.9,135.4 416.7,177.6 410.0,222.4 406.9,250.0 405.3,289.5 406.9,334.3 410.0,360.7 414.0,387.0 419.3,418.7 425.9,450.3 431.7,470.0 443.8,504.3 449.6,530.6 454.9,559.6 459.6,586.0 464.1,609.7 467.5,630.8 470.7,654.5 472.8,670.3 474.7,680.9 476.0,694.0 476.0,704.5" fill="none" stroke="#f0f" stroke-width="1" />
<polyline points="476.0,704.5 460.8,730.7" fill="none" stroke="#f0f" stroke-width="1" />
<polyline points="476.0,704.5 506.5,728.6 515.0,731.0" fill="none" stroke="#f0f" stroke-width="1" />
<polyline points="399.8,283.8 365.3,320.6 363.3,325.8 360.3,334.6 351.9,357.9 349.4,363.7 345.6,369.2 338.6,383.1 338.6,394.5 340.6,409.4 331.7,424.3 320.9,446.5 326.7,450.3 344.4,458.4 299.7,470.3 323.4,497.3 283.0,507.4 325.4,516.2 281.2,529.4 177.2,551.3 338.0,556.6 339.3,561.4 370.9,566.0 374.7,579.4 344.4,586.2 338.0,592.5 330.5,596.3 317.3,601.3 338.0,602.1 351.2,603.1 360.0,604.4 415.3,609.2 423.3,610.5 429.3,612.3 429.3,628.1 438.5,641.9 411.4,646.6 439.1,652.4 429.8,659.2 433.8,666.4 419.3,671.6 438.5,680.9 428.0,688.2 421.1,694.8 428.0,699.3 435.1,702.7 456.1,705.7 470.2,709.7 465.5,717.4 462.0,726.8 473.7,730.7" fill="none" stroke="#0ff" stroke-width="1" />
<polyline points="659.2,105.1 659.2,107.2 654.4,115.7 632.3,129.6 620.9,136.7 613.6,147.3 612.5,149.1 583.5,171.5 574.0,178.1 572.4,179.7 554.3,202.6 541.3,210.5 540.3,217.1 518.1,225.6 515.5,230.3 504.2,242.4 487.8,252.2 486.5,254.0 482.6,272.4 472.5,284.3 443.0,321.2 440.9,326.4 439.6,334.3 436.4,358.1 433.8,363.9 430.4,369.9 422.5,383.1 421.9,395.0 418.5,409.5 419.3,424.5 422.5,446.4 422.5,458.7 425.1,470.1 431.2,496.4 433.3,508.2 433.3,516.9 436.5,529.5 440.4,553.0 441.2,559.6 441.7,566.2 446.5,578.1 447.0,586.0 449.6,593.9 449.6,597.8 446.5,603.1 439.1,607.1 436.4,609.7 440.4,613.6 449.6,628.1 451.7,642.6 452.3,646.6 450.9,651.9 458.8,659.2 465.4,670.3 473.3,679.5 479.9,688.2 489.2,695.4 487.8,702.0 483.0,709.0 501.8,725.6 506.5,728.6 515.9,730.3 521.7,731.4" fill="none" stroke="#f00" stroke-width="1" />
<path d="M657.0 105.5h5M659.5 103.0v5M657.0 107.5h5M659.5 105.0v5M652.0 115.5h5M654.5 113.0v5M630.0 129.5h5M632.5 127.0v5M618.0 136.5h5M620.5 134.0v5M611.0 147.5h5M613.5 145.0v5M610.0 149.5h5M612.5 147.0v5M581.0 171.5h5M583.5 169.0v5M572.0 178.5h5M574.5 176.0v5M570.0 179.5h5M572.5 177.0v5M552.0 202.5h5M554.5 200.0v5M539.0 210.5h5M541.5 208.0v5M538.0 217.5h5M540.5 215.0v5M516.0 225.5h5M518.5 223.0v5M513.0 230.5h5M515.5 228.0v5M502.0 242.5h5M504.5 240.0v5M485.0 252.5h5M487.5 250.0v5M484.0 254.5h5M486.5 252.0v5M480.0 272.5h5M482.5 270.0v5M470.0 284.5h5M472.5 282.0v5M440.0 321.5h5M442.5 319.0v5M438.0 326.5h5M440.5 324.0v5M437.0 334.5h5M439.5 332.0v5M434.0 358.5h5M436.5 356.0v5M431.0 363.5h5M433.5 361.0v5M428.0 369.5h5M430.5 367.0v5M420.0 383.5h5M422.5 381.0v5M419.0 394.5h5M421.5 392.0v5M416.0 409.5h5M418.5 407.0v5M417.0 424.5h5M419.5 422.0v5M420.0 446.5h5M422.5 444.0v5M420.0 458.5h5M422.5 456.0v5M423.0 470.5h5M425.5 468.0v5M429.0 496.5h5M431.5 494.0v5M431.0 508.5h5M433.5 506.0v5M431.0 516.5h5M433.5 514.0v5M434.0 529.5h5M436.5 527.0v5M438.0 552.5h5M440.5 550.0v5M439.0 559.5h5M441.5 557.0v5M439.0 566.5h5M441.5 564.0v5M444.0 578.5h5M446.5 576.0v5M444.0 586.5h5M446.5 584.0v5M447.0 593.5h5M449.5 591.0v5M447.0 597.5h5M449.5 595.0v5M444.0 603.5h5M446.5 601.0v5M437.0 607.5h5M439.5 605.0v5M434.0 609.5h5M436.5 607.0v5M438.0 613.5h5M440.5 611.0v5M447.0 628.5h5M449.5 626.0v5M449.0 642.5h5M451.5 640.0v5M450.0 646.5h5M452.5 644.0v5M448.0 651.5h5M450.5 649.0v5M456.0 659.5h5M458.5 657.0v5M463.0 670.5h5M465.5 668.0v5M471.0 679.5h5M473.5 677.0v5M477.0 688.5h5M479.5 686.0v5M487.0 695.5h5M489.5 693.0v5M485.0 702.5h5M487.5 700.0v5M480.0 708.5h5M482.5 706.0v5M499.0 725.5h5M501.5 723.0v5M504.0 728.5h5M506.5 726.0v5M513.0 730.5h5M515.5 728.0v5M519.0 731.5h5M521.5 729.0v5" stroke="#fff" stroke-width="1" fill="none"/>
<path d="M397.0 283.5h5M399.5 281.0v5M363.0 320.5h5M365.5 318.0v5M361.0 325.5h5M363.5 323.0v5M358.0 334.5h5M360.5 332.0v5M349.0 357.5h5M351.5 355.0v5M347.0 363.5h5M349.5 361.0v5M343.0 369.5h5M345.5 367.0v5M336.0 383.5h5M338.5 381.0v5M336.0 394.5h5M338.5 392.0v5M338.0 409.5h5M340.5 407.0v5M329.0 424.5h5M331.5 422.0v5M318.0 446.5h5M320.5 444.0v5M324.0 450.5h5M326.5 448.0v5M342.0 458.5h5M344.5 456.0v5M297.0 470.5h5M299.5 468.0v5M321.0 497.5h5M323.5 495.0v5M280.0 507.5h5M282.5 505.0v5M323.0 516.5h5M325.5 514.0v5M279.0 529.5h5M281.5 527.0v5M175.0 551.5h5M177.5 549.0v5M336.0 556.5h5M338.5 554.0v5M337.0 561.5h5M339.5 559.0v5M368.0 566.5h5M370.5 564.0v5M372.0 579.5h5M374.5 577.0v5M342.0 586.5h5M344.5 584.0v5M336.0 592.5h5M338.5 590.0v5M328.0 596.5h5M330.5 594.0v5M315.0 601.5h5M317.5 599.0v5M336.0 602.5h5M338.5 600.0v5M349.0 603.5h5M351.5 601.0v5M358.0 604.5h5M360.5 602.0v5M413.0 609.5h5M415.5 607.0v5M421.0 610.5h5M423.5 608.0v5M427.0 612.5h5M429.5 610.0v5M427.0 628.5h5M429.5 626.0v5M436.0 641.5h5M438.5 639.0v5M409.0 646.5h5M411.5 644.0v5M437.0 652.5h5M439.5 650.0v5M427.0 659.5h5M429.5 657.0v5M431.0 666.5h5M433.5 664.0v5M417.0 671.5h5M419.5 669.0v5M436.0 680.5h5M438.5 678.0v5M426.0 688.5h5M428.5 686.0v5M419.0 694.5h5M421.5 692.0v5M426.0 699.5h5M428.5 697.0v5M433.0 702.5h5M435.5 700.0v5M454.0 705.5h5M456.5 703.0v5M468.0 709.5h5M470.5 707.0v5M463.0 717.5h5M465.5 715.0v5M460.0 726.5h5M462.5 724.0v5M471.0 730.5h5M473.5 728.0v5" stroke="#fff" stroke-width="1" fill="none"/>
<path d="M155.0 50.5h5M157.5 48.0v5M179.0 67.5h5M181.5 65.0v5M209.0 88.5h5M211.5 86.0v5M179.0 104.5h5M181.5 102.0v5M173.0 106.5h5M175.5 104.0v5M160.0 115.5h5M162.5 113.0v5M144.0 129.5h5M146.5 127.0v5M160.0 136.5h5M162.5 134.0v5M185.0 146.5h5M187.5 144.0v5M191.0 149.5h5M193.5 147.0v5M245.0 171.5h5M247.5 169.0v5M245.0 180.5h5M247.5 178.0v5M185.0 202.5h5M187.5 200.0v5M221.0 210.5h5M223.5 208.0v5M245.0 215.5h5M247.5 213.0v5M257.0 218.5h5M259.5 216.0v5M280.0 224.5h5M282.5 222.0v5M293.0 230.5h5M295.5 228.0v5M275.0 242.5h5M277.5 240.0v5M262.0 251.5h5M264.5 249.0v5M257.0 254.5h5M259.5 252.0v5M275.0 272.5h5M277.5 270.0v5M287.0 284.5h5M289.5 282.0v5M329.0 321.5h5M331.5 319.0v5M341.0 326.5h5M343.5 324.0v5M353.0 334.5h5M355.5 332.0v5M329.0 357.5h5M331.5 355.0v5M335.0 363.5h5M337.5 361.0v5M342.0 369.5h5M344.5 367.0v5M311.0 383.5h5M313.5 381.0v5M293.0 394.5h5M295.5 392.0v5M263.0 409.5h5M265.5 407.0v5M233.0 424.5h5M235.5 422.0v5M245.0 446.5h5M247.5 444.0v5M245.0 458.5h5M247.5 456.0v5M251.0 470.5h5M253.5 468.0v5M251.0 497.5h5M253.5 495.0v5M251.0 507.5h5M253.5 505.0v5M257.0 516.5h5M259.5 514.0v5M257.0 529.5h5M259.5 527.0v5M269.0 551.5h5M271.5 549.0v5M269.0 556.5h5M271.5 554.0v5M275.0 562.5h5M277.5 560.0v5M275.0 566.5h5M277.5 564.0v5M281.0 579.5h5M283.5 577.0v5M269.0 586.5h5M271.5 584.0v5M221.0 592.5h5M223.5 590.0v5M245.0 596.5h5M247.5 594.0v5M281.0 602.5h5M283.5 600.0v5M233.0 608.5h5M235.5 606.0v5M221.0 611.5h5M223.5 609.0v5M227.0 628.5h5M229.5 626.0v5M233.0 642.5h5M235.5 640.0v5M233.0 646.5h5M235.5 644.0v5M239.0 653.5h5M241.5 651.0v5M245.0 658.5h5M247.5 656.0v5M245.0 665.5h5M247.5 663.0v5M245.0 671.5h5M247.5 669.0v5M245.0 680.5h5M247.5 678.0v5M245.0 687.5h5M247.5 685.0v5M203.0 693.5h5M205.5 691.0v5M173.0 699.5h5M175.5 697.0v5M154.0 703.5h5M156.5 701.0v5M132.0 706.5h5M134.5 704.0v5M95.0 708.5h5M97.5 706.0v5M95.0 715.5h5M97.5 713.0v5M71.0 718.5h5M73.5 716.0v5M71.0 725.5h5M73.5 723.0v5M84.0 725.5h5M86.5 723.0v5M70.0 726.5h5M72.5 724.0v5M70.0 730.5h5M72.5 728.0v5" stroke="#fff" stroke-width="1" fill="none"/>
<path d="M135.0 50.5h5M137.5 48.0v5M160.0 67.5h5M162.5 65.0v5M208.0 88.5h5M210.5 86.0v5M223.0 104.5h5M225.5 102.0v5M226.0 107.5h5M228.5 105.0v5M197.0 115.5h5M199.5 113.0v5M154.0 129.5h5M156.5 127.0v5M127.0 136.5h5M129.5 134.0v5M79.0 146.5h5M81.5 144.0v5M82.0 149.5h5M84.5 147.0v5M156.0 171.5h5M158.5 169.0v5M181.0 177.5h5M183.5 175.0v5M193.0 180.5h5M195.5 178.0v5M119.0 202.5h5M121.5 200.0v5M106.0 210.5h5M108.5 208.0v5M129.0 215.5h5M131.5 213.0v5M142.0 218.5h5M144.5 216.0v5M168.0 224.5h5M170.5 222.0v5M183.0 230.5h5M185.5 228.0v5M174.0 242.5h5M176.5 240.0v5M169.0 250.5h5M171.5 248.0v5M165.0 254.5h5M167.5 252.0v5M188.0 272.5h5M190.5 270.0v5M204.0 284.5h5M206.5 282.0v5M258.0 321.5h5M260.5 319.0v5M269.0 326.5h5M271.5 324.0v5M279.0 334.5h5M281.5 332.0v5M271.0 357.5h5M273.5 355.0v5M264.0 363.5h5M266.5 361.0v5M257.0 369.5h5M259.5 367.0v5M231.0 383.5h5M233.5 381.0v5M216.0 394.5h5M218.5 392.0v5M174.0 409.5h5M176.5 407.0v5M137.0 424.5h5M139.5 422.0v5M154.0 446.5h5M156.5 444.0v5M154.0 458.5h5M156.5 456.0v5M158.0 470.5h5M160.5 468.0v5M153.0 497.5h5M155.5 495.0v5M151.0 507.5h5M153.5 505.0v5M154.0 516.5h5M156.5 514.0v5M153.0 529.5h5M155.5 527.0v5M158.0 551.5h5M160.5 549.0v5M156.0 556.5h5M158.5 554.0v5M160.0 562.5h5M162.5 560.0v5M161.0 579.5h5M163.5 577.0v5M145.0 586.5h5M147.5 584.0v5M118.0 592.5h5M120.5 590.0v5M125.0 596.5h5M127.5 594.0v5M147.0 602.5h5M149.5 600.0v5M118.0 610.5h5M120.5 608.0v5M133.0 628.5h5M135.5 626.0v5M145.0 642.5h5M147.5 640.0v5M152.0 646.5h5M154.5 644.0v5M156.0 653.5h5M158.5 651.0v5M164.0 659.5h5M166.5 657.0v5M168.0 665.5h5M170.5 663.0v5M159.0 671.5h5M161.5 669.0v5M144.0 680.5h5M146.5 678.0v5M132.0 687.5h5M134.5 685.0v5M130.0 694.5h5M132.5 692.0v5M141.0 699.5h5M143.5 697.0v5M128.0 703.5h5M130.5 701.0v5M132.0 706.5h5M134.5 704.0v5M153.0 709.5h5M155.5 707.0v5M178.0 711.5h5M180.5 709.0v5M183.0 716.5h5M185.5 714.0v5M207.0 718.5h5M209.5 716.0v5M210.0 722.5h5M212.5 720.0v5M223.0 725.5h5M225.5 723.0v5M206.0 727.5h5M208.5 725.0v5M212.0 731.5h5M214.5 729.0v5" stroke="#fff" stroke-width="1" fill="none"/>
<path d="M288.0 659.5h5M290.5 657.0v5M282.0 664.5h5M284.5 662.0v5M291.0 671.5h5M293.5 669.0v5M315.0 686.5h5M317.5 684.0v5M280.0 693.5h5M282.5 691.0v5M274.0 695.5h5M276.5 693.0v5M252.0 699.5h5M254.5 697.0v5M234.0 702.5h5M236.5 700.0v5M213.0 707.5h5M215.5 705.0v5M189.0 710.5h5M191.5 708.0v5M152.0 710.5h5M154.5 708.0v5M152.0 714.5h5M154.5 712.0v5M183.0 718.5h5M185.5 716.0v5M207.0 721.5h5M209.5 719.0v5M210.0 724.5h5M212.5 722.0v5M188.0 727.5h5M190.5 725.0v5M204.0 729.5h5M206.5 727.0v5M212.0 730.5h5M214.5 728.0v5" stroke="#fff" stroke-width="1" fill="none"/>
<path d="M74.0 706.5h5M76.5 704.0v5M121.0 710.5h5M123.5 708.0v5M138.0 710.5h5M140.5 708.0v5M138.0 718.5h5M140.5 716.0v5M144.0 724.5h5M146.5 722.0v5M174.0 727.5h5M176.5 725.0v5M210.0 728.5h5M212.5 726.0v5M298.0 729.5h5M300.5 727.0v5M324.0 730.5h5M326.5 728.0v5M370.0 730.5h5M372.5 728.0v5" stroke="#fff" stroke-width="1" fill="none"/>
<path d="M59.0 670.5h5M61.5 668.0v5M120.0 680.5h5M122.5 678.0v5M59.0 687.5h5M61.5 685.0v5" stroke="#fff" stroke-width="1" fill="none"/>
<path d="M59.0 698.5h5M61.5 696.0v5M114.0 701.5h5M116.5 699.0v5M186.0 703.5h5M188.5 701.0v5M204.0 703.5h5M206.5 701.0v5" stroke="#fff" stroke-width="1" fill="none"/>
<path d="M67.0 731.5h5M69.5 729.0v5M118.0 727.5h5M120.5 725.0v5M136.0 724.5h5M138.5 722.0v5M138.0 711.5h5M140.5 709.0v5M157.0 707.5h5M159.5 705.0v5M181.0 706.5h5M183.5 704.0v5" stroke="#fff" stroke-width="1" fill="none"/>
<path d="M59.0 653.5h5M61.5 651.0v5M59.0 659.5h5M61.5 657.0v5M59.0 646.5h5M61.5 644.0v5M59.0 642.5h5M61.5 640.0v5" stroke="#fff" stroke-width="1" fill="none"/>
</g>
<g shape-rendering="crispEdges">
<rect x="284" y="651" width="7" height="7" fill="#c8c800"/>
<rect x="307" y="679" width="7" height="7" fill="#c8c800"/>
<rect x="212" y="704" width="7" height="7" fill="#c8c800"/>
<rect x="67.5" y="607.5" width="44" height="17" fill="#000" stroke="#ff0"/>
<rect x="67.5" y="636.5" width="57" height="17" fill="#000" stroke="#d06800"/>
<rect x="625.5" y="695.5" width="30" height="17" fill="#000" stroke="#f0f" stroke-width="1"/>
</g>
<text x="287.5" y="657.0" font-size="7px" text-anchor="middle" fill="#000">3</text>
<text x="310.5" y="685.0" font-size="7px" text-anchor="middle" fill="#000">2</text>
<text x="215.5" y="710.0" font-size="7px" text-anchor="middle" fill="#000">1</text>
<text x="89.5" y="621" text-anchor="middle" fill="#ff0">CAPE</text>
<text x="96" y="650" text-anchor="middle" fill="#d06800">CINH * 5</text>
<text x="640.5" y="709" text-anchor="middle" fill="#f0f">LCL</text>
<text x="53" y="55.0" text-anchor="end" fill="#fff">100</text>
<text x="53" y="326.0" text-anchor="end" fill="#fff">200</text>
<text x="53" y="454.0" text-anchor="end" fill="#fff">300</text>
<text x="53" y="534.0" text-anchor="end" fill="#fff">400</text>
<text x="53" y="591.0" text-anchor="end" fill="#fff">500</text>
<text x="53" y="635.0" text-anchor="end" fill="#fff">600</text>
<text x="53" y="670.0" text-anchor="end" fill="#fff">700</text>
<text x="53" y="699.0" text-anchor="end" fill="#fff">800</text>
<text x="53" y="724.0" text-anchor="end" fill="#fff">900</text>
<text x="53" y="745.0" text-anchor="end" fill="#fff">1000</text>
<text x="671" y="49.7" fill="#fff">16540m</text>
<text x="671" y="320.7" fill="#fff">12160m</text>
<text x="671" y="448.7" fill="#fff">9490m</text>
<text x="671" y="528.7" fill="#fff">7440m</text>
<text x="671" y="585.7" fill="#fff">5770m</text>
<text x="671" y="629.7" fill="#fff">4331m</text>
<text x="671" y="664.7" fill="#fff">3115m</text>
<text x="671" y="693.7" fill="#fff">2001m</text>
<text x="671" y="718.7" fill="#fff">1006m</text>
<text x="59.0" y="768" text-anchor="middle" fill="#fff">-50</text>
<text x="61.5" y="805.5" text-anchor="middle" fill="#fff">0</text>
<text x="61.5" y="842.5" text-anchor="middle" fill="#fff">0</text>
<text x="119.0" y="768" text-anchor="middle" fill="#fff">-40</text>
<text x="121.5" y="805.5" text-anchor="middle" fill="#fff">10</text>
<text x="121.5" y="842.5" text-anchor="middle" fill="#fff">300</text>
<text x="179.0" y="768" text-anchor="middle" fill="#fff">-30</text>
<text x="181.5" y="805.5" text-anchor="middle" fill="#fff">20</text>
<text x="181.5" y="842.5" text-anchor="middle" fill="#fff">600</text>
<text x="239.0" y="768" text-anchor="middle" fill="#fff">-20</text>
<text x="241.5" y="805.5" text-anchor="middle" fill="#fff">30</text>
<text x="241.5" y="842.5" text-anchor="middle" fill="#fff">900</text>
<text x="299.0" y="768" text-anchor="middle" fill="#fff">-10</text>
<text x="301.5" y="805.5" text-anchor="middle" fill="#fff">40</text>
<text x="301.5" y="842.5" text-anchor="middle" fill="#fff">1200</text>
<text x="361.5" y="768" text-anchor="middle" fill="#fff">0</text>
<text x="361.5" y="805.5" text-anchor="middle" fill="#fff">50</text>
<text x="361.5" y="842.5" text-anchor="middle" fill="#fff">1500</text>
<text x="421.5" y="768" text-anchor="middle" fill="#fff">10</text>
<text x="421.5" y="805.5" text-anchor="middle" fill="#fff">60</text>
<text x="421.5" y="842.5" text-anchor="middle" fill="#fff">1800</text>
<text x="481.5" y="768" text-anchor="middle" fill="#fff">20</text>
<text x="481.5" y="805.5" text-anchor="middle" fill="#fff">70</text>
<text x="481.5" y="842.5" text-anchor="middle" fill="#fff">2100</text>
<text x="541.5" y="768" text-anchor="middle" fill="#fff">30</text>
<text x="541.5" y="805.5" text-anchor="middle" fill="#fff">80</text>
<text x="541.5" y="842.5" text-anchor="middle" fill="#fff">2400</text>
<text x="601.5" y="768" text-anchor="middle" fill="#fff">40</text>
<text x="601.5" y="805.5" text-anchor="middle" fill="#fff">90</text>
<text x="601.5" y="842.5" text-anchor="middle" fill="#fff">2700</text>
<text x="661.5" y="768" text-anchor="middle" fill="#fff">50</text>
<text x="661.5" y="805.5" text-anchor="middle" fill="#fff">100</text>
<text x="661.5" y="842.5" text-anchor="middle" fill="#fff">3000</text>
<text x="59.0" y="879" text-anchor="middle" fill="#fff">-100</text>
<text x="134.0" y="879" text-anchor="middle" fill="#fff">-50</text>
<text x="211.5" y="879" text-anchor="middle" fill="#fff">0</text>
<text x="286.5" y="879" text-anchor="middle" fill="#fff">50</text>
<text x="361.5" y="879" text-anchor="middle" fill="#fff">100</text>
<text x="436.5" y="879" text-anchor="middle" fill="#fff">150</text>
<text x="511.5" y="879" text-anchor="middle" fill="#fff">200</text>
<text x="586.5" y="879" text-anchor="middle" fill="#fff">250</text>
<text x="661.5" y="879" text-anchor="middle" fill="#fff">300</text>
<text x="361.5" y="781" text-anchor="middle" fill="#fff" xml:space="preserve">Temperature, Dewpoint  [ °C ]</text>
<text x="361.5" y="819" text-anchor="middle" fill="#fff" xml:space="preserve">Windspeed  [ knt ]</text>
<text x="361.5" y="856.5" text-anchor="middle" fill="#fff" xml:space="preserve">CAPE, CINH * 5  [ J/kg ]</text>
<text x="361.5" y="892.5" text-anchor="middle" fill="#fff" xml:space="preserve">Storm Relative Helicity  [ m^2/s^2 ]</text>
<text y="28.5" font-size="16.4px" font-weight="bold" fill="#fff"><tspan x="62.6" textLength="240.4" lengthAdjust="spacingAndGlyphs">Station: 06610 Payerne (LSMP)</tspan><tspan x="324.7" textLength="127.7" lengthAdjust="spacingAndGlyphs">Date: 06.07.2014</tspan><tspan x="474.9" textLength="90.9" lengthAdjust="spacingAndGlyphs">Time: 1100Z</tspan></text>
<text x="747" y="32" fill="#0f0">OBS</text>
<text x="818" y="32" fill="#ff0080">SR</text>
<g shape-rendering="crispEdges">
<line x1="761.5" y1="40.0" x2="761.5" y2="770.0" stroke="#0f0" stroke-width="1"/>
<line x1="826.5" y1="40.0" x2="826.5" y2="770.0" stroke="#ff0080" stroke-width="1"/>
<line x1="761.5" y1="68.1" x2="753.6" y2="95.4" stroke="#fff" stroke-width="1"/>
<line x1="761.5" y1="106.0" x2="771.3" y2="134.4" stroke="#fff" stroke-width="1"/>
<line x1="761.5" y1="121.2" x2="765.0" y2="144.0" stroke="#fff" stroke-width="1"/>
<line x1="761.5" y1="131.3" x2="745.3" y2="161.7" stroke="#fff" stroke-width="1"/>
<line x1="761.5" y1="146.5" x2="737.2" y2="162.9" stroke="#fff" stroke-width="1"/>
<line x1="761.5" y1="149.0" x2="739.0" y2="166.2" stroke="#fff" stroke-width="1"/>
<line x1="761.5" y1="128.8" x2="750.3" y2="156.6" stroke="#fff" stroke-width="1"/>
<line x1="761.5" y1="171.8" x2="747.3" y2="196.5" stroke="#fff" stroke-width="1"/>
<line x1="761.5" y1="179.4" x2="752.1" y2="204.6" stroke="#fff" stroke-width="1"/>
<line x1="761.5" y1="184.4" x2="754.1" y2="208.4" stroke="#fff" stroke-width="1"/>
<line x1="761.5" y1="202.1" x2="741.0" y2="231.2" stroke="#fff" stroke-width="1"/>
<line x1="761.5" y1="212.2" x2="742.2" y2="237.5" stroke="#fff" stroke-width="1"/>
<line x1="761.5" y1="222.3" x2="744.0" y2="247.6" stroke="#fff" stroke-width="1"/>
<line x1="761.5" y1="230.0" x2="745.3" y2="252.8" stroke="#fff" stroke-width="1"/>
<line x1="761.5" y1="241.4" x2="746.5" y2="265.4" stroke="#fff" stroke-width="1"/>
<line x1="761.5" y1="252.8" x2="747.3" y2="279.3" stroke="#fff" stroke-width="1"/>
<line x1="761.5" y1="254.5" x2="747.8" y2="280.6" stroke="#fff" stroke-width="1"/>
<line x1="761.5" y1="273.0" x2="748.3" y2="298.8" stroke="#fff" stroke-width="1"/>
<line x1="761.5" y1="284.3" x2="749.8" y2="311.4" stroke="#fff" stroke-width="1"/>
<line x1="761.5" y1="322.3" x2="753.6" y2="350.1" stroke="#fff" stroke-width="1"/>
<line x1="761.5" y1="326.1" x2="754.1" y2="361.4" stroke="#fff" stroke-width="1"/>
<line x1="761.5" y1="358.9" x2="751.6" y2="395.6" stroke="#fff" stroke-width="1"/>
<line x1="761.5" y1="381.7" x2="751.6" y2="410.7" stroke="#fff" stroke-width="1"/>
<line x1="761.5" y1="407.0" x2="748.6" y2="434.2" stroke="#fff" stroke-width="1"/>
<line x1="761.5" y1="424.6" x2="745.3" y2="448.7" stroke="#fff" stroke-width="1"/>
<line x1="761.5" y1="447.4" x2="748.1" y2="468.9" stroke="#fff" stroke-width="1"/>
<line x1="761.5" y1="457.5" x2="750.0" y2="477.0" stroke="#fff" stroke-width="1"/>
<line x1="761.5" y1="450.0" x2="747.3" y2="474.0" stroke="#fff" stroke-width="1"/>
<line x1="761.5" y1="458.8" x2="747.3" y2="484.1" stroke="#fff" stroke-width="1"/>
<line x1="761.5" y1="470.2" x2="747.3" y2="495.5" stroke="#fff" stroke-width="1"/>
<line x1="761.5" y1="498.0" x2="746.0" y2="522.0" stroke="#fff" stroke-width="1"/>
<line x1="761.5" y1="509.4" x2="745.3" y2="532.2" stroke="#fff" stroke-width="1"/>
<line x1="761.5" y1="517.0" x2="745.3" y2="541.0" stroke="#fff" stroke-width="1"/>
<line x1="761.5" y1="529.6" x2="745.3" y2="553.6" stroke="#fff" stroke-width="1"/>
<line x1="761.5" y1="552.4" x2="744.5" y2="573.9" stroke="#fff" stroke-width="1"/>
<line x1="761.5" y1="558.7" x2="744.5" y2="581.4" stroke="#fff" stroke-width="1"/>
<line x1="761.5" y1="565.0" x2="744.0" y2="587.8" stroke="#fff" stroke-width="1"/>
<line x1="761.5" y1="578.9" x2="742.8" y2="602.9" stroke="#fff" stroke-width="1"/>
<line x1="761.5" y1="586.5" x2="742.2" y2="606.7" stroke="#fff" stroke-width="1"/>
<line x1="761.5" y1="600.4" x2="739.7" y2="621.9" stroke="#fff" stroke-width="1"/>
<line x1="761.5" y1="604.2" x2="740.2" y2="623.2" stroke="#fff" stroke-width="1"/>
<line x1="761.5" y1="611.8" x2="742.8" y2="632.0" stroke="#fff" stroke-width="1"/>
<line x1="761.5" y1="614.3" x2="743.5" y2="634.0" stroke="#fff" stroke-width="1"/>
<line x1="761.5" y1="628.2" x2="745.3" y2="652.2" stroke="#fff" stroke-width="1"/>
<line x1="761.5" y1="641.6" x2="746.1" y2="665.3" stroke="#fff" stroke-width="1"/>
<line x1="761.5" y1="649.5" x2="747.6" y2="670.0" stroke="#fff" stroke-width="1"/>
<line x1="761.5" y1="655.8" x2="747.2" y2="677.9" stroke="#fff" stroke-width="1"/>
<line x1="761.5" y1="662.1" x2="748.4" y2="685.8" stroke="#fff" stroke-width="1"/>
<line x1="761.5" y1="668.4" x2="748.4" y2="689.0" stroke="#fff" stroke-width="1"/>
<line x1="761.5" y1="676.3" x2="746.9" y2="696.9" stroke="#fff" stroke-width="1"/>
<line x1="761.5" y1="685.8" x2="747.6" y2="703.2" stroke="#fff" stroke-width="1"/>
<line x1="761.5" y1="693.7" x2="743.7" y2="709.5" stroke="#fff" stroke-width="1"/>
<line x1="735.2" y1="698.4" x2="761.5" y2="717.6" stroke="#fff" stroke-width="1"/>
<line x1="735.2" y1="702.0" x2="761.5" y2="716.8" stroke="#fff" stroke-width="1"/>
<line x1="732.2" y1="713.3" x2="761.5" y2="711.2" stroke="#fff" stroke-width="1"/>
<line x1="733.2" y1="718.4" x2="761.5" y2="709.0" stroke="#fff" stroke-width="1"/>
<line x1="736.3" y1="724.6" x2="761.5" y2="704.0" stroke="#fff" stroke-width="1"/>
<line x1="741.4" y1="727.7" x2="761.5" y2="697.6" stroke="#fff" stroke-width="1"/>
<line x1="745.5" y1="727.7" x2="761.5" y2="691.9" stroke="#fff" stroke-width="1"/>
<line x1="748.6" y1="725.1" x2="761.5" y2="690.0" stroke="#fff" stroke-width="1"/>
<line x1="739.0" y1="715.0" x2="761.5" y2="700.0" stroke="#fff" stroke-width="1"/>
<line x1="737.0" y1="721.0" x2="761.5" y2="707.0" stroke="#fff" stroke-width="1"/>
<line x1="761.5" y1="705.6" x2="766.6" y2="689.2" stroke="#fff" stroke-width="1"/>
<line x1="763.0" y1="708.7" x2="765.1" y2="691.3" stroke="#fff" stroke-width="1"/>
<line x1="761.5" y1="722.0" x2="789.7" y2="717.4" stroke="#fff" stroke-width="1"/>
<line x1="761.5" y1="725.1" x2="790.7" y2="719.5" stroke="#fff" stroke-width="1"/>
<line x1="761.5" y1="728.2" x2="790.7" y2="722.0" stroke="#fff" stroke-width="1"/>
<line x1="761.5" y1="731.2" x2="790.7" y2="726.1" stroke="#fff" stroke-width="1"/>
<line x1="826.5" y1="68.1" x2="852.7" y2="80.3" stroke="#fff" stroke-width="1"/>
<line x1="826.5" y1="88.9" x2="850.7" y2="104.8" stroke="#fff" stroke-width="1"/>
<line x1="826.5" y1="104.8" x2="854.5" y2="113.1" stroke="#fff" stroke-width="1"/>
<line x1="826.5" y1="107.3" x2="854.5" y2="114.4" stroke="#fff" stroke-width="1"/>
<line x1="826.5" y1="114.9" x2="855.2" y2="122.0" stroke="#fff" stroke-width="1"/>
<line x1="826.5" y1="128.8" x2="856.0" y2="132.6" stroke="#fff" stroke-width="1"/>
<line x1="826.5" y1="136.4" x2="855.2" y2="143.5" stroke="#fff" stroke-width="1"/>
<line x1="826.5" y1="146.5" x2="854.7" y2="151.6" stroke="#fff" stroke-width="1"/>
<line x1="826.5" y1="148.5" x2="850.7" y2="165.5" stroke="#fff" stroke-width="1"/>
<line x1="826.5" y1="171.8" x2="842.6" y2="204.6" stroke="#fff" stroke-width="1"/>
<line x1="826.5" y1="176.8" x2="835.0" y2="199.6" stroke="#fff" stroke-width="1"/>
<line x1="826.5" y1="202.6" x2="850.7" y2="218.8" stroke="#fff" stroke-width="1"/>
<line x1="826.5" y1="212.2" x2="831.2" y2="238.8" stroke="#fff" stroke-width="1"/>
<line x1="826.5" y1="212.2" x2="824.9" y2="247.6" stroke="#fff" stroke-width="1"/>
<line x1="826.5" y1="230.0" x2="831.2" y2="237.6" stroke="#fff" stroke-width="1"/>
<line x1="826.5" y1="233.8" x2="823.7" y2="259.1" stroke="#fff" stroke-width="1"/>
<line x1="826.5" y1="251.5" x2="833.2" y2="283.1" stroke="#fff" stroke-width="1"/>
<line x1="826.5" y1="274.2" x2="833.2" y2="300.8" stroke="#fff" stroke-width="1"/>
<line x1="826.5" y1="284.3" x2="833.2" y2="312.2" stroke="#fff" stroke-width="1"/>
<line x1="826.5" y1="322.3" x2="833.7" y2="348.8" stroke="#fff" stroke-width="1"/>
<line x1="826.5" y1="326.1" x2="833.2" y2="361.4" stroke="#fff" stroke-width="1"/>
<line x1="826.5" y1="358.9" x2="837.5" y2="384.2" stroke="#fff" stroke-width="1"/>
<line x1="826.5" y1="371.6" x2="835.0" y2="391.8" stroke="#fff" stroke-width="1"/>
<line x1="826.5" y1="381.7" x2="833.7" y2="406.9" stroke="#fff" stroke-width="1"/>
<line x1="826.5" y1="394.3" x2="835.0" y2="422.1" stroke="#fff" stroke-width="1"/>
<line x1="826.5" y1="412.0" x2="833.7" y2="439.8" stroke="#fff" stroke-width="1"/>
<line x1="826.5" y1="424.6" x2="835.7" y2="452.4" stroke="#fff" stroke-width="1"/>
<line x1="826.5" y1="447.4" x2="832.4" y2="470.1" stroke="#fff" stroke-width="1"/>
<line x1="826.5" y1="450.0" x2="835.7" y2="476.5" stroke="#fff" stroke-width="1"/>
<line x1="826.5" y1="455.0" x2="835.7" y2="486.7" stroke="#fff" stroke-width="1"/>
<line x1="826.5" y1="465.2" x2="833.7" y2="498.0" stroke="#fff" stroke-width="1"/>
<line x1="826.5" y1="498.0" x2="832.4" y2="525.8" stroke="#fff" stroke-width="1"/>
<line x1="826.5" y1="508.1" x2="831.2" y2="535.9" stroke="#fff" stroke-width="1"/>
<line x1="826.5" y1="515.7" x2="829.9" y2="546.0" stroke="#fff" stroke-width="1"/>
<line x1="826.5" y1="533.4" x2="828.6" y2="558.7" stroke="#fff" stroke-width="1"/>
<line x1="826.5" y1="581.4" x2="813.6" y2="627.0" stroke="#fff" stroke-width="1"/>
<line x1="826.5" y1="601.7" x2="823.7" y2="625.7" stroke="#fff" stroke-width="1"/>
<line x1="826.5" y1="594.1" x2="836.2" y2="619.4" stroke="#fff" stroke-width="1"/>
<line x1="826.5" y1="611.8" x2="836.2" y2="639.6" stroke="#fff" stroke-width="1"/>
<line x1="826.5" y1="627.0" x2="837.5" y2="654.8" stroke="#fff" stroke-width="1"/>
<line x1="826.5" y1="642.1" x2="838.2" y2="672.4" stroke="#fff" stroke-width="1"/>
<line x1="826.5" y1="652.2" x2="838.2" y2="680.0" stroke="#fff" stroke-width="1"/>
<line x1="826.5" y1="664.9" x2="835.0" y2="690.0" stroke="#fff" stroke-width="1"/>
<line x1="831.4" y1="640.0" x2="837.7" y2="655.8" stroke="#fff" stroke-width="1"/>
<line x1="826.5" y1="643.2" x2="837.7" y2="670.0" stroke="#fff" stroke-width="1"/>
<line x1="826.5" y1="649.5" x2="838.5" y2="673.2" stroke="#fff" stroke-width="1"/>
<line x1="826.5" y1="657.4" x2="838.5" y2="681.1" stroke="#fff" stroke-width="1"/>
<line x1="826.5" y1="666.9" x2="838.5" y2="692.1" stroke="#fff" stroke-width="1"/>
<line x1="826.5" y1="676.3" x2="836.9" y2="698.5" stroke="#fff" stroke-width="1"/>
<line x1="828.5" y1="680.0" x2="836.7" y2="698.4" stroke="#fff" stroke-width="1"/>
<line x1="830.0" y1="676.0" x2="838.8" y2="694.3" stroke="#fff" stroke-width="1"/>
<line x1="826.5" y1="703.6" x2="848.0" y2="692.3" stroke="#fff" stroke-width="1"/>
<line x1="826.5" y1="705.6" x2="851.6" y2="695.9" stroke="#fff" stroke-width="1"/>
<line x1="826.5" y1="707.7" x2="855.2" y2="700.5" stroke="#fff" stroke-width="1"/>
<line x1="826.5" y1="702.0" x2="856.2" y2="707.2" stroke="#fff" stroke-width="1"/>
<line x1="826.5" y1="713.8" x2="852.6" y2="709.7" stroke="#fff" stroke-width="1"/>
<line x1="826.5" y1="718.9" x2="852.6" y2="712.8" stroke="#fff" stroke-width="1"/>
<line x1="826.5" y1="723.0" x2="852.6" y2="717.4" stroke="#fff" stroke-width="1"/>
<line x1="826.5" y1="726.0" x2="852.6" y2="717.9" stroke="#fff" stroke-width="1"/>
<line x1="826.5" y1="730.7" x2="852.6" y2="718.4" stroke="#fff" stroke-width="1"/>
<line x1="826.5" y1="697.4" x2="838.8" y2="706.6" stroke="#fff" stroke-width="1"/>
<line x1="826.5" y1="710.0" x2="845.0" y2="703.0" stroke="#fff" stroke-width="1"/>
<polyline points="826.5,561.2 823.7,591.6 817.4,614.3 811.5,627.0" fill="none" stroke="#fff" stroke-width="1" />
<line x1="761.5" y1="88.4" x2="761.5" y2="106.0" stroke="#fff" stroke-width="1"/>
<line x1="761.0" y1="693.3" x2="761.0" y2="731.2" stroke="#fff" stroke-width="2"/>
</g>
<text x="894" y="39.5" fill="#fff" text-decoration="underline">Parameter</text>
<text x="1124" y="39.5" fill="#fff" text-anchor="end" text-decoration="underline">Value LCL</text>
<text x="1214" y="39.5" fill="#fff" text-anchor="end" text-decoration="underline">Value CCL</text>
<text x="1230" y="39.5" fill="#fff" text-decoration="underline">Unit</text>
<text x="894" y="61.5" fill="#fff">Convective Temperature:</text>
<text x="1124" y="61.5" fill="#f00" text-anchor="end">28.47</text>
<text x="1230" y="61.5" fill="#fff">[°C]</text>
<text x="894" y="78.5" fill="#fff">Snowfall Height:</text>
<text x="1124" y="78.5" fill="#fff" text-anchor="end">3263.64</text>
<text x="1230" y="78.5" fill="#fff">[m]</text>
<text x="894" y="103.5" fill="#fff" text-decoration="underline">Parcels: Using 100mB mean layer LCL + CCL</text>
<text x="894" y="123.5" fill="#fff">Lifted Index:</text>
<text x="1124" y="123.5" fill="#f00" text-anchor="end">-2.05</text>
<text x="1214" y="123.5" fill="#f00" text-anchor="end">-4.28</text>
<text x="1230" y="123.5" fill="#fff">[°C]</text>
<text x="894" y="140.5" fill="#fff">CAPE:</text>
<text x="1124" y="140.5" fill="#f00" text-anchor="end">517.48</text>
<text x="1214" y="140.5" fill="#f00" text-anchor="end">1332.28</text>
<text x="1230" y="140.5" fill="#fff">[J/kg]</text>
<text x="894" y="157.5" fill="#fff">CINH:</text>
<text x="1124" y="157.5" fill="#f00" text-anchor="end">69.79</text>
<text x="1230" y="157.5" fill="#fff">[J/kg]</text>
<text x="894" y="174.5" fill="#fff">CAPE Virt.:</text>
<text x="1124" y="174.5" fill="#f00" text-anchor="end">606.63</text>
<text x="1214" y="174.5" fill="#f00" text-anchor="end">1233.57</text>
<text x="1230" y="174.5" fill="#fff">[J/kg]</text>
<text x="894" y="191.5" fill="#fff">CINH Virt.:</text>
<text x="1124" y="191.5" fill="#f00" text-anchor="end">44.27</text>
<text x="1230" y="191.5" fill="#fff">[J/kg]</text>
<text x="894" y="208.5" fill="#fff">DCAPE (LFS = 548mB):</text>
<text x="1124" y="208.5" fill="#ff0" text-anchor="end">440.73</text>
<text x="1230" y="208.5" fill="#fff">[J/kg]</text>
<text x="894" y="225.5" fill="#fff">850-600 Lapse Rate:</text>
<text x="1124" y="225.5" fill="#ff0" text-anchor="end">18.75</text>
<text x="1230" y="225.5" fill="#fff">[°C]</text>
<text x="894" y="242.5" fill="#fff">Fawbush-Miller Hail Size:</text>
<text x="1124" y="242.5" fill="#f00" text-anchor="end">2.5 - 3.8</text>
<text x="1230" y="242.5" fill="#fff">[cm]</text>
<text x="894" y="259.5" fill="#fff">Sig. Hail Param. (SHIP):</text>
<text x="1124" y="259.5" fill="#f00" text-anchor="end">1.14</text>
<text x="1230" y="259.5" fill="#fff">[1]</text>
<text x="894" y="276.5" fill="#fff">Max. Hail Size (new, new2, old):</text>
<text x="1124" y="276.5" fill="#f00" text-anchor="end">3.32</text>
<text x="1230" y="276.5" fill="#fff">[cm]</text>
<text x="1124" y="276.5" fill="#fff" xml:space="preserve"><tspan fill="#fff" x="1124.0">,</tspan><tspan fill="#f00" x="1136.9">3.35</tspan><tspan fill="#fff">,</tspan><tspan fill="#f00" x="1173.5">4.43</tspan></text>
<text x="894" y="296.5" fill="#fff">LCL / CCL (AGL):</text>
<text x="1124" y="296.5" fill="#ff0" text-anchor="end">1133.12</text>
<text x="1214" y="296.5" fill="#ff0" text-anchor="end">1673.73</text>
<text x="1230" y="296.5" fill="#fff">[m]</text>
<text x="894" y="313.5" fill="#fff">Convective Height:</text>
<text x="1124" y="313.5" fill="#f00" text-anchor="end">8.77</text>
<text x="1214" y="313.5" fill="#f00" text-anchor="end">9.06</text>
<text x="1230" y="313.5" fill="#fff">[km]</text>
<text x="894" y="338.5" fill="#fff" text-decoration="underline">Convective Indices</text>
<text x="894" y="358.5" fill="#fff">Showalter Index:</text>
<text x="1124" y="358.5" fill="#f00" text-anchor="end">0.17</text>
<text x="1230" y="358.5" fill="#fff">[°C]</text>
<text x="894" y="375.5" fill="#fff">Modified Thompson Index:</text>
<text x="1124" y="375.5" fill="#f00" text-anchor="end">41.94</text>
<text x="1230" y="375.5" fill="#fff">[°C]</text>
<text x="894" y="392.5" fill="#fff">Total Totals Index:</text>
<text x="1124" y="392.5" fill="#f00" text-anchor="end">48.00</text>
<text x="1230" y="392.5" fill="#fff">[°C]</text>
<text x="894" y="409.5" fill="#fff">KO Index:</text>
<text x="1124" y="409.5" fill="#f00" text-anchor="end">-17.08</text>
<text x="1230" y="409.5" fill="#fff">[1]</text>
<text x="894" y="426.5" fill="#fff">Craven SigSvr / 1000:</text>
<text x="1124" y="426.5" fill="#f00" text-anchor="end">9.99</text>
<text x="1230" y="426.5" fill="#fff">[m^3/s^3]</text>
<text x="894" y="443.5" fill="#fff">SCP RM (new, old):</text>
<text x="1124" y="443.5" fill="#0f0" text-anchor="end">0.04</text>
<text x="1230" y="443.5" fill="#fff">[1]</text>
<text x="1124" y="443.5" fill="#fff" xml:space="preserve"><tspan fill="#fff" x="1124.0">,</tspan><tspan fill="#f00" x="1136.9">1.58</tspan></text>
<text x="894" y="460.5" fill="#fff">SCP LM (new, old):</text>
<text x="1124" y="460.5" fill="#f00" text-anchor="end">2.13</text>
<text x="1230" y="460.5" fill="#fff">[1]</text>
<text x="1124" y="460.5" fill="#fff" xml:space="preserve"><tspan fill="#fff" x="1124.0">,</tspan><tspan fill="#f00" x="1136.9">3.99</tspan></text>
<text x="894" y="477.5" fill="#fff">STP (new, old):</text>
<text x="1124" y="477.5" fill="#0f0" text-anchor="end">0.00</text>
<text x="1230" y="477.5" fill="#fff">[1]</text>
<text x="1124" y="477.5" fill="#fff" xml:space="preserve"><tspan fill="#fff" x="1124.0">,</tspan><tspan fill="#0f0" x="1136.9">0.01</tspan></text>
<text x="894" y="494.5" fill="#fff">SB STP (fix):</text>
<text x="1124" y="494.5" fill="#0f0" text-anchor="end">0.03</text>
<text x="1230" y="494.5" fill="#fff">[1]</text>
<text x="894" y="511.5" fill="#fff">Derecho Comp Param:</text>
<text x="1124" y="511.5" fill="#f00" text-anchor="end">0.97</text>
<text x="1230" y="511.5" fill="#fff">[1]</text>
<text x="894" y="528.5" fill="#fff">MCS 18m/s (MMP, MSP):</text>
<text x="1124" y="528.5" fill="#0f0" text-anchor="end">49.99</text>
<text x="1230" y="528.5" fill="#fff">[%]</text>
<text x="1124" y="528.5" fill="#fff" xml:space="preserve"><tspan fill="#fff" x="1124.0">,</tspan><tspan fill="#fff" x="1136.9">---</tspan></text>
<text x="894" y="545.5" fill="#fff">Exp. Supercell Index CH:</text>
<text x="1124" y="545.5" fill="#f00" text-anchor="end">3.71</text>
<text x="1230" y="545.5" fill="#fff">[1]</text>
<text x="894" y="562.5" fill="#fff">SWISS 12 Index:</text>
<text x="1124" y="562.5" fill="#f00" text-anchor="end">-12.85</text>
<text x="1230" y="562.5" fill="#fff">[1]</text>
<text x="894" y="587.5" fill="#fff" text-decoration="underline">Wind Parameters</text>
<text x="894" y="607.5" fill="#fff">Storm Direction:</text>
<text x="1124" y="607.5" fill="#fff" text-anchor="end">240.87</text>
<text x="1230" y="607.5" fill="#fff">[°]</text>
<text x="894" y="624.5" fill="#fff">Storm Motion:</text>
<text x="1124" y="624.5" fill="#ff0" text-anchor="end">23.48</text>
<text x="1230" y="624.5" fill="#fff">[knt]</text>
<text x="894" y="644.5" fill="#fff">SR Wind Sfc-2km:</text>
<text x="1124" y="644.5" fill="#ff0" text-anchor="end">13.96</text>
<text x="1230" y="644.5" fill="#fff">[knt]</text>
<text x="894" y="661.5" fill="#fff">SR Wind 4km-6km:</text>
<text x="1124" y="661.5" fill="#0f0" text-anchor="end">12.58</text>
<text x="1230" y="661.5" fill="#fff">[knt]</text>
<text x="894" y="678.5" fill="#fff">SR Wind 9km-11km:</text>
<text x="1124" y="678.5" fill="#f00" text-anchor="end">22.00</text>
<text x="1230" y="678.5" fill="#fff">[knt] HP</text>
<text x="894" y="698.5" fill="#fff">Effective Shear 6000:</text>
<text x="1124" y="698.5" fill="#f00" text-anchor="end">37.51</text>
<text x="1230" y="698.5" fill="#fff">[knt]</text>
<text x="894" y="718.5" fill="#fff">Bulk Richardson Number:</text>
<text x="1124" y="718.5" fill="#0f0" text-anchor="end">6.50</text>
<text x="1214" y="718.5" fill="#ff0" text-anchor="end">16.74</text>
<text x="1230" y="718.5" fill="#fff">[1]</text>
<text x="894" y="738.5" fill="#fff">3km Effective SRH:</text>
<text x="1124" y="738.5" fill="#0f0" text-anchor="end">50.92</text>
<text x="1230" y="738.5" fill="#fff">[m^2/s^2]</text>
<text x="894" y="755.5" fill="#fff">Max 3km SRH (Sfc-2km):</text>
<text x="1124" y="755.5" fill="#0f0" text-anchor="end">89.71</text>
<text x="1230" y="755.5" fill="#fff">[m^2/s^2]</text>
<text x="894" y="772.5" fill="#fff">Max 3km SRH Level AGL:</text>
<text x="1124" y="772.5" fill="#0f0" text-anchor="end">1335.00</text>
<text x="1230" y="772.5" fill="#fff">[m]</text>
<text x="894" y="792.5" fill="#fff">3km Energy Helicity Index:</text>
<text x="1124" y="792.5" fill="#0f0" text-anchor="end">0.16</text>
<text x="1214" y="792.5" fill="#0f0" text-anchor="end">0.42</text>
<text x="1230" y="792.5" fill="#fff">[1]</text>
<text x="894" y="809.5" fill="#fff">3km Vorticity Gen. Pot.:</text>
<text x="1124" y="809.5" fill="#0f0" text-anchor="end">0.12</text>
<text x="1214" y="809.5" fill="#f00" text-anchor="end">0.20</text>
<text x="1230" y="809.5" fill="#fff">[m/s^2]</text>
<rect x="729" y="827" width="15" height="8" fill="#f00" shape-rendering="crispEdges"/>
<text x="753" y="835.5" fill="#f00">Temperature Profile</text>
<rect x="729" y="847" width="15" height="8" fill="#0ff" shape-rendering="crispEdges"/>
<text x="753" y="855.5" fill="#0ff">Dewpoint Profile</text>
<rect x="729" y="867" width="15" height="8" fill="#0f0" shape-rendering="crispEdges"/>
<text x="753" y="875.5" fill="#0f0">OBS Windspeed Profile</text>
<rect x="729" y="887" width="15" height="8" fill="#ff0080" shape-rendering="crispEdges"/>
<text x="753" y="895.5" fill="#ff0080">SR Windspeed Profile</text>
<rect x="729" y="907" width="15" height="8" fill="#c8c800" shape-rendering="crispEdges"/>
<text x="753" y="915.5" fill="#c8c800">Sfc-3km Storm Relative Helicity Profile</text>
<rect x="729" y="927" width="15" height="8" fill="#403800" shape-rendering="crispEdges"/>
<text x="753" y="935.5" fill="#403800">Effective Layer (CAPE &gt;= 100 J/kg)</text>
<rect x="1080" y="827" width="14" height="8" fill="#0f0" shape-rendering="crispEdges"/>
<text x="1103" y="835.5" fill="#0f0">No / Non Severe Thunderstorms</text>
<rect x="1080" y="847" width="14" height="8" fill="#ff0" shape-rendering="crispEdges"/>
<text x="1103" y="855.5" fill="#ff0">Scattered / Moderate Thunderstorms</text>
<rect x="1080" y="867" width="14" height="8" fill="#f00" shape-rendering="crispEdges"/>
<text x="1103" y="875.5" fill="#f00">Widespread / Severe Thunderstorms</text>
</svg>
</body></html>
